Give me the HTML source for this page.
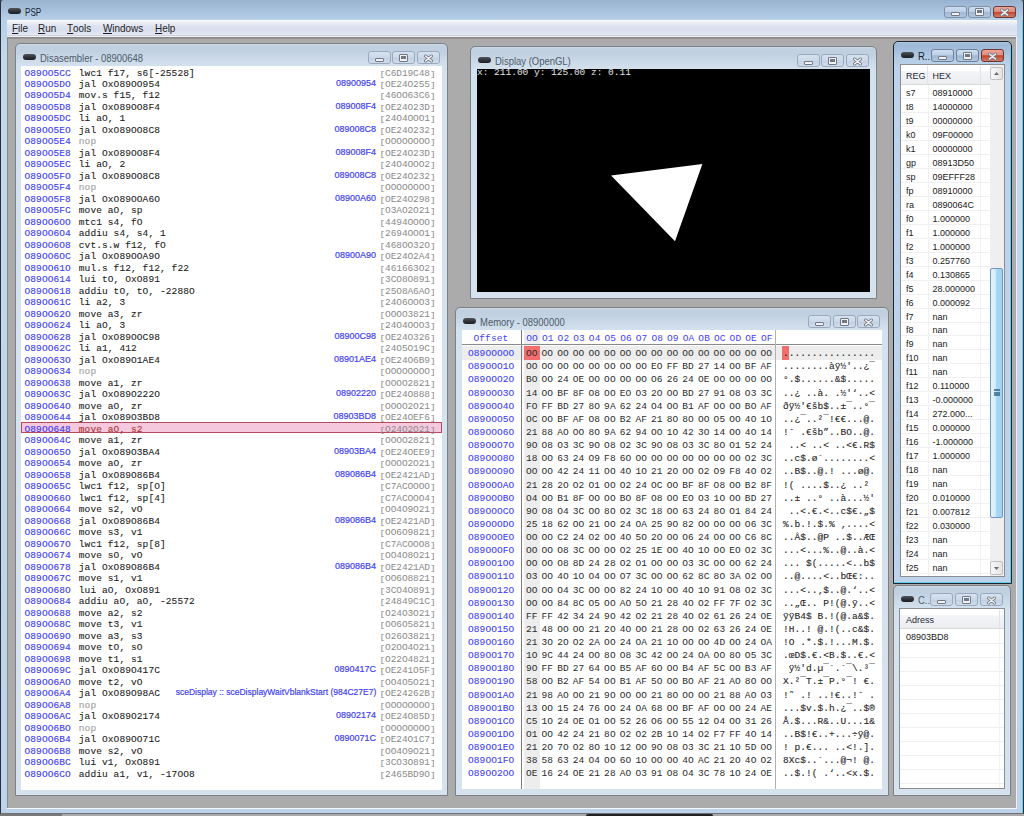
<!DOCTYPE html><html><head><meta charset="utf-8"><style>
*{margin:0;padding:0;box-sizing:border-box}
html,body{width:1024px;height:816px;overflow:hidden;background:#4a4a4a;position:relative}
body{font-family:"Liberation Sans",sans-serif}
.abs{position:absolute}
#main{position:absolute;left:0;top:0;width:1024px;height:814px;border:1px solid #2a2f38;border-top:0;border-bottom-color:#6e7276;border-radius:3px 3px 0 0;
 background:linear-gradient(#98b2d0 0px,#b6d0e8 20px,#c4d9ee 60px,#bcd3eb 814px)}
#mainr{position:absolute;left:1022px;top:20px;width:1px;height:793px;background:#5fd0f0}
#menubar{position:absolute;left:7px;top:20px;width:1010px;height:16px;
 background:linear-gradient(#ffffff 0px,#f2f4f8 1px,#eef0f6 2px,#dde2ef 6px,#dadfee 10px,#e1e6f2 14.5px,#cfd2e2 15px)}
#mdi{position:absolute;left:7px;top:36px;width:1010px;height:773px;background:#ababab;
 border-top:1px solid #f0f0f0;border-bottom:1px solid #f4f6f9;border-right:1px solid #f0f0f0}
#mdi:before{content:"";position:absolute;left:0;top:0;right:0;height:2px;background:linear-gradient(#888,#959595)}
#mdi:after{content:"";position:absolute;left:0;top:0;bottom:0;width:1px;background:#888}
.menu{position:absolute;top:21px;font-size:11px;color:#1e1e1e;line-height:14px;transform-origin:0 0;transform:scaleX(0.9)}
.menu u{text-decoration:none;position:relative}
.menu u:after{content:"";position:absolute;left:0;right:0;bottom:0px;height:1px;background:#1e1e1e}
.win{position:absolute;border:1px solid #7c7f84;border-radius:5px 5px 0 0;
 background:linear-gradient(#cfdbe8 0px,#c0d0e0 2px,#c2d1e1 8px,#cddbe9 16px,#d4e1ee 23px,#d6e3ef 100%)}
.win.active{border-color:#20252c;background:linear-gradient(#b4cae2 0px,#9eb9d8 2px,#a4bfdc 8px,#b6cde6 18px,#bcd3eb 26px,#bcd3eb 100%)}
.win.active:after{content:"";position:absolute;right:0;top:6px;bottom:0;width:1px;background:#5ccdf0}
.win.active:before{content:"";position:absolute;left:0;right:0;bottom:0;height:1px;background:#5ccdf0}
.ttl{position:absolute;font-size:11px;color:#4d5a6a;white-space:nowrap;line-height:13px;transform-origin:0 0;transform:scaleX(0.86)}
.win.active .ttl{color:#141c28}
.pill{position:absolute;width:13px;height:6px;border-radius:3px;background:linear-gradient(#50545c,#2e3137 55%,#1d1f23)}
.btn{position:absolute;width:23px;height:13px;border:1px solid #9aa9bd;border-radius:3px;
 background:linear-gradient(#d6e2ef,#cbd8e7 50%,#c1d0e2 55%,#d0ddeb)}
.win.active .btn{border-color:#6f809a;background:linear-gradient(#cfdeef,#bed0e6 45%,#9fb8d5 52%,#b3c8e0)}
.win.active .btn.cls{border-color:#6f3434;background:linear-gradient(#eaa597,#dd8d7b 45%,#c4462c 52%,#d77a60)}
.g{position:absolute}
.content{position:absolute;background:#fff;overflow:hidden}
.mono{font-family:"Liberation Mono",monospace}
.dl{position:absolute;left:0;height:12px;font-size:9.5px;letter-spacing:0.1px;line-height:12px;white-space:pre;color:#1e1e1e;-webkit-text-stroke:0.1px #1e1e1e}
.dl .addr{-webkit-text-stroke:0.15px #3f3ff2}
.dl .nop{-webkit-text-stroke:0.2px #a8a8a8}
.dl .sel{-webkit-text-stroke:0.1px #a83434}
.addr{color:#3f3ff2}
.nop{color:#a8a8a8}
.sel{color:#a83434}
.tgt{position:absolute;font-size:9px;color:#3f3ff2;line-height:12px;white-space:nowrap;text-align:right;-webkit-text-stroke:0.2px #3f3ff2}
.hex{position:absolute;font-size:9.5px;letter-spacing:-0.1px;color:#8a8a8a;line-height:12px;white-space:pre}
.hex b{font-weight:normal;display:inline-block;transform:scaleY(0.8)}
.mh{position:absolute;font-size:9.5px;letter-spacing:0.1px;line-height:12px;white-space:pre}
.reg{position:absolute;font-size:9px;color:#1a1a1a;line-height:12px;white-space:nowrap}
</style></head><body>
<div id="main"></div><div id="mainr"></div>
<div class="pill" style="left:8px;top:8px"></div>
<div class="ttl" style="left:25px;top:6px;color:#1c2533;font-size:11px;transform:scaleX(0.74)">PSP</div>
<div class="g" style="left:944px;top:6px;width:23px;height:12px;border:1px solid #7f90a8;border-radius:3px;background:linear-gradient(#cfdeef,#bed0e6 45%,#9fb8d5 52%,#b3c8e0)"></div>
<div class="g" style="left:968px;top:6px;width:23px;height:12px;border:1px solid #7f90a8;border-radius:3px;background:linear-gradient(#cfdeef,#bed0e6 45%,#9fb8d5 52%,#b3c8e0)"></div>
<div class="g" style="left:993px;top:6px;width:23px;height:12px;border:1px solid #6f3a3a;border-radius:3px;background:linear-gradient(#eaa597,#dd8d7b 45%,#c4462c 52%,#d77a60)"></div>
<div class="g" style="left:951px;top:11.5px;width:9px;height:4px;border:1px solid #707888;border-radius:1px;background:#f2f2f2"></div>
<div class="g" style="left:975px;top:8px;width:9px;height:8px;border:1px solid #707888;border-radius:1px;background:#f2f2f2"></div>
<div class="g" style="left:977px;top:10px;width:5px;height:3px;border:1px solid #707888;background:#6a7a90"></div>
<svg class="g" style="left:998.5px;top:7.5px" width="11" height="9" viewBox="0 0 11 9"><path d="M2.5 2 L8.5 7 M8.5 2 L2.5 7" stroke="#707888" stroke-width="3" stroke-linecap="round"/><path d="M2.5 2 L8.5 7 M8.5 2 L2.5 7" stroke="#f6f6f6" stroke-width="1.5" stroke-linecap="round"/></svg>
<div id="menubar"></div>
<div class="menu" style="left:12px"><u>F</u>ile</div>
<div class="menu" style="left:38px"><u>R</u>un</div>
<div class="menu" style="left:67px"><u>T</u>ools</div>
<div class="menu" style="left:103px"><u>W</u>indows</div>
<div class="menu" style="left:155px"><u>H</u>elp</div>
<div id="mdi"></div>
<div class="win" style="left:15px;top:43px;width:433px;height:753px">
<div class="pill" style="left:7px;top:10px"></div>
<div class="ttl" style="left:24px;top:8px">Disasembler - 08900648</div>
<div class="btn min" style="left:352px;top:7px"></div>
<div class="btn max" style="left:376px;top:7px"></div>
<div class="btn cls" style="left:401px;top:7px"></div>
</div>
<div class="g" style="left:375px;top:57.5px;width:9px;height:4px;border:1px solid #707888;border-radius:1px;background:#f2f2f2"></div>
<div class="g" style="left:399px;top:54px;width:9px;height:8px;border:1px solid #707888;border-radius:1px;background:#f2f2f2"></div>
<div class="g" style="left:401px;top:56px;width:5px;height:3px;border:1px solid #707888;background:#6a7a90"></div>
<svg class="g" style="left:422.5px;top:53.5px" width="11" height="9" viewBox="0 0 11 9"><path d="M2.5 2 L8.5 7 M8.5 2 L2.5 7" stroke="#707888" stroke-width="3" stroke-linecap="round"/><path d="M2.5 2 L8.5 7 M8.5 2 L2.5 7" stroke="#f6f6f6" stroke-width="1.5" stroke-linecap="round"/></svg>
<div class="content" style="left:21px;top:66px;width:421px;height:724px">
<div class="dl mono" style="left:3.5px;top:2px"><span class="addr">O89OO5CC</span></div>
<div class="dl mono" style="left:57.8px;top:2px"><span class="">lwc1 f17, s6[-25528]</span></div>
<div class="hex mono" style="left:358.5px;top:2px"><b>[</b>C6D19C48<b>]</b></div>
<div class="dl mono" style="left:3.5px;top:13px"><span class="addr">O89OO5DO</span></div>
<div class="dl mono" style="left:57.8px;top:13px"><span class="">jal OxO89OO954</span></div>
<div class="tgt" style="right:66px;top:11px">08900954</div>
<div class="hex mono" style="left:358.5px;top:13px"><b>[</b>OE24O255<b>]</b></div>
<div class="dl mono" style="left:3.5px;top:24px"><span class="addr">O89OO5D4</span></div>
<div class="dl mono" style="left:57.8px;top:24px"><span class="">mov.s f15, f12</span></div>
<div class="hex mono" style="left:358.5px;top:24px"><b>[</b>46OO63C6<b>]</b></div>
<div class="dl mono" style="left:3.5px;top:36px"><span class="addr">O89OO5D8</span></div>
<div class="dl mono" style="left:57.8px;top:36px"><span class="">jal OxO89OO8F4</span></div>
<div class="tgt" style="right:66px;top:34px">089008F4</div>
<div class="hex mono" style="left:358.5px;top:36px"><b>[</b>OE24O23D<b>]</b></div>
<div class="dl mono" style="left:3.5px;top:47px"><span class="addr">O89OO5DC</span></div>
<div class="dl mono" style="left:57.8px;top:47px"><span class="">li aO, 1</span></div>
<div class="hex mono" style="left:358.5px;top:47px"><b>[</b>24O4OOO1<b>]</b></div>
<div class="dl mono" style="left:3.5px;top:59px"><span class="addr">O89OO5EO</span></div>
<div class="dl mono" style="left:57.8px;top:59px"><span class="">jal OxO89OO8C8</span></div>
<div class="tgt" style="right:66px;top:57px">089008C8</div>
<div class="hex mono" style="left:358.5px;top:59px"><b>[</b>OE24O232<b>]</b></div>
<div class="dl mono" style="left:3.5px;top:70px"><span class="addr">O89OO5E4</span></div>
<div class="dl mono" style="left:57.8px;top:70px"><span class="nop">nop</span></div>
<div class="hex mono" style="left:358.5px;top:70px"><b>[</b>OOOOOOOO<b>]</b></div>
<div class="dl mono" style="left:3.5px;top:82px"><span class="addr">O89OO5E8</span></div>
<div class="dl mono" style="left:57.8px;top:82px"><span class="">jal OxO89OO8F4</span></div>
<div class="tgt" style="right:66px;top:80px">089008F4</div>
<div class="hex mono" style="left:358.5px;top:82px"><b>[</b>OE24O23D<b>]</b></div>
<div class="dl mono" style="left:3.5px;top:93px"><span class="addr">O89OO5EC</span></div>
<div class="dl mono" style="left:57.8px;top:93px"><span class="">li aO, 2</span></div>
<div class="hex mono" style="left:358.5px;top:93px"><b>[</b>24O4OOO2<b>]</b></div>
<div class="dl mono" style="left:3.5px;top:105px"><span class="addr">O89OO5FO</span></div>
<div class="dl mono" style="left:57.8px;top:105px"><span class="">jal OxO89OO8C8</span></div>
<div class="tgt" style="right:66px;top:103px">089008C8</div>
<div class="hex mono" style="left:358.5px;top:105px"><b>[</b>OE24O232<b>]</b></div>
<div class="dl mono" style="left:3.5px;top:116px"><span class="addr">O89OO5F4</span></div>
<div class="dl mono" style="left:57.8px;top:116px"><span class="nop">nop</span></div>
<div class="hex mono" style="left:358.5px;top:116px"><b>[</b>OOOOOOOO<b>]</b></div>
<div class="dl mono" style="left:3.5px;top:128px"><span class="addr">O89OO5F8</span></div>
<div class="dl mono" style="left:57.8px;top:128px"><span class="">jal OxO89OOA6O</span></div>
<div class="tgt" style="right:66px;top:126px">08900A60</div>
<div class="hex mono" style="left:358.5px;top:128px"><b>[</b>OE24O298<b>]</b></div>
<div class="dl mono" style="left:3.5px;top:139px"><span class="addr">O89OO5FC</span></div>
<div class="dl mono" style="left:57.8px;top:139px"><span class="">move aO, sp</span></div>
<div class="hex mono" style="left:358.5px;top:139px"><b>[</b>O3AO2O21<b>]</b></div>
<div class="dl mono" style="left:3.5px;top:151px"><span class="addr">O89OO6OO</span></div>
<div class="dl mono" style="left:57.8px;top:151px"><span class="">mtc1 s4, fO</span></div>
<div class="hex mono" style="left:358.5px;top:151px"><b>[</b>4494OOOO<b>]</b></div>
<div class="dl mono" style="left:3.5px;top:162px"><span class="addr">O89OO6O4</span></div>
<div class="dl mono" style="left:57.8px;top:162px"><span class="">addiu s4, s4, 1</span></div>
<div class="hex mono" style="left:358.5px;top:162px"><b>[</b>2694OOO1<b>]</b></div>
<div class="dl mono" style="left:3.5px;top:174px"><span class="addr">O89OO6O8</span></div>
<div class="dl mono" style="left:57.8px;top:174px"><span class="">cvt.s.w f12, fO</span></div>
<div class="hex mono" style="left:358.5px;top:174px"><b>[</b>468OO32O<b>]</b></div>
<div class="dl mono" style="left:3.5px;top:185px"><span class="addr">O89OO6OC</span></div>
<div class="dl mono" style="left:57.8px;top:185px"><span class="">jal OxO89OOA9O</span></div>
<div class="tgt" style="right:66px;top:183px">08900A90</div>
<div class="hex mono" style="left:358.5px;top:185px"><b>[</b>OE24O2A4<b>]</b></div>
<div class="dl mono" style="left:3.5px;top:197px"><span class="addr">O89OO61O</span></div>
<div class="dl mono" style="left:57.8px;top:197px"><span class="">mul.s f12, f12, f22</span></div>
<div class="hex mono" style="left:358.5px;top:197px"><b>[</b>461663O2<b>]</b></div>
<div class="dl mono" style="left:3.5px;top:208px"><span class="addr">O89OO614</span></div>
<div class="dl mono" style="left:57.8px;top:208px"><span class="">lui tO, OxO891</span></div>
<div class="hex mono" style="left:358.5px;top:208px"><b>[</b>3CO8O891<b>]</b></div>
<div class="dl mono" style="left:3.5px;top:220px"><span class="addr">O89OO618</span></div>
<div class="dl mono" style="left:57.8px;top:220px"><span class="">addiu tO, tO, -2288O</span></div>
<div class="hex mono" style="left:358.5px;top:220px"><b>[</b>25O8A6AO<b>]</b></div>
<div class="dl mono" style="left:3.5px;top:231px"><span class="addr">O89OO61C</span></div>
<div class="dl mono" style="left:57.8px;top:231px"><span class="">li a2, 3</span></div>
<div class="hex mono" style="left:358.5px;top:231px"><b>[</b>24O6OOO3<b>]</b></div>
<div class="dl mono" style="left:3.5px;top:243px"><span class="addr">O89OO62O</span></div>
<div class="dl mono" style="left:57.8px;top:243px"><span class="">move a3, zr</span></div>
<div class="hex mono" style="left:358.5px;top:243px"><b>[</b>OOOO3821<b>]</b></div>
<div class="dl mono" style="left:3.5px;top:254px"><span class="addr">O89OO624</span></div>
<div class="dl mono" style="left:57.8px;top:254px"><span class="">li aO, 3</span></div>
<div class="hex mono" style="left:358.5px;top:254px"><b>[</b>24O4OOO3<b>]</b></div>
<div class="dl mono" style="left:3.5px;top:266px"><span class="addr">O89OO628</span></div>
<div class="dl mono" style="left:57.8px;top:266px"><span class="">jal OxO89OOC98</span></div>
<div class="tgt" style="right:66px;top:264px">08900C98</div>
<div class="hex mono" style="left:358.5px;top:266px"><b>[</b>OE24O326<b>]</b></div>
<div class="dl mono" style="left:3.5px;top:277px"><span class="addr">O89OO62C</span></div>
<div class="dl mono" style="left:57.8px;top:277px"><span class="">li a1, 412</span></div>
<div class="hex mono" style="left:358.5px;top:277px"><b>[</b>24O5O19C<b>]</b></div>
<div class="dl mono" style="left:3.5px;top:289px"><span class="addr">O89OO63O</span></div>
<div class="dl mono" style="left:57.8px;top:289px"><span class="">jal OxO89O1AE4</span></div>
<div class="tgt" style="right:66px;top:287px">08901AE4</div>
<div class="hex mono" style="left:358.5px;top:289px"><b>[</b>OE24O6B9<b>]</b></div>
<div class="dl mono" style="left:3.5px;top:300px"><span class="addr">O89OO634</span></div>
<div class="dl mono" style="left:57.8px;top:300px"><span class="nop">nop</span></div>
<div class="hex mono" style="left:358.5px;top:300px"><b>[</b>OOOOOOOO<b>]</b></div>
<div class="dl mono" style="left:3.5px;top:312px"><span class="addr">O89OO638</span></div>
<div class="dl mono" style="left:57.8px;top:312px"><span class="">move a1, zr</span></div>
<div class="hex mono" style="left:358.5px;top:312px"><b>[</b>OOOO2821<b>]</b></div>
<div class="dl mono" style="left:3.5px;top:323px"><span class="addr">O89OO63C</span></div>
<div class="dl mono" style="left:57.8px;top:323px"><span class="">jal OxO89O222O</span></div>
<div class="tgt" style="right:66px;top:321px">08902220</div>
<div class="hex mono" style="left:358.5px;top:323px"><b>[</b>OE24O888<b>]</b></div>
<div class="dl mono" style="left:3.5px;top:335px"><span class="addr">O89OO64O</span></div>
<div class="dl mono" style="left:57.8px;top:335px"><span class="">move aO, zr</span></div>
<div class="hex mono" style="left:358.5px;top:335px"><b>[</b>OOOO2O21<b>]</b></div>
<div class="dl mono" style="left:3.5px;top:346px"><span class="addr">O89OO644</span></div>
<div class="dl mono" style="left:57.8px;top:346px"><span class="">jal OxO89O3BD8</span></div>
<div class="tgt" style="right:66px;top:344px">08903BD8</div>
<div class="hex mono" style="left:358.5px;top:346px"><b>[</b>OE24OEF6<b>]</b></div>
<div class="abs" style="left:0;top:356px;width:421px;height:11px;background:#f5c8de;border:1px solid #b34a5e"></div>
<div class="dl mono" style="left:3.5px;top:358px"><span class="addr">O89OO648</span></div>
<div class="dl mono" style="left:57.8px;top:358px"><span class="sel">move aO, s2</span></div>
<div class="hex mono" style="left:358.5px;top:358px"><b>[</b>O24O2O21<b>]</b></div>
<div class="dl mono" style="left:3.5px;top:369px"><span class="addr">O89OO64C</span></div>
<div class="dl mono" style="left:57.8px;top:369px"><span class="">move a1, zr</span></div>
<div class="hex mono" style="left:358.5px;top:369px"><b>[</b>OOOO2821<b>]</b></div>
<div class="dl mono" style="left:3.5px;top:381px"><span class="addr">O89OO65O</span></div>
<div class="dl mono" style="left:57.8px;top:381px"><span class="">jal OxO89O3BA4</span></div>
<div class="tgt" style="right:66px;top:379px">08903BA4</div>
<div class="hex mono" style="left:358.5px;top:381px"><b>[</b>OE24OEE9<b>]</b></div>
<div class="dl mono" style="left:3.5px;top:392px"><span class="addr">O89OO654</span></div>
<div class="dl mono" style="left:57.8px;top:392px"><span class="">move aO, zr</span></div>
<div class="hex mono" style="left:358.5px;top:392px"><b>[</b>OOOO2O21<b>]</b></div>
<div class="dl mono" style="left:3.5px;top:404px"><span class="addr">O89OO658</span></div>
<div class="dl mono" style="left:57.8px;top:404px"><span class="">jal OxO89O86B4</span></div>
<div class="tgt" style="right:66px;top:402px">089086B4</div>
<div class="hex mono" style="left:358.5px;top:404px"><b>[</b>OE2421AD<b>]</b></div>
<div class="dl mono" style="left:3.5px;top:415px"><span class="addr">O89OO65C</span></div>
<div class="dl mono" style="left:57.8px;top:415px"><span class="">lwc1 f12, sp[O]</span></div>
<div class="hex mono" style="left:358.5px;top:415px"><b>[</b>C7ACOOOO<b>]</b></div>
<div class="dl mono" style="left:3.5px;top:427px"><span class="addr">O89OO66O</span></div>
<div class="dl mono" style="left:57.8px;top:427px"><span class="">lwc1 f12, sp[4]</span></div>
<div class="hex mono" style="left:358.5px;top:427px"><b>[</b>C7ACOOO4<b>]</b></div>
<div class="dl mono" style="left:3.5px;top:438px"><span class="addr">O89OO664</span></div>
<div class="dl mono" style="left:57.8px;top:438px"><span class="">move s2, vO</span></div>
<div class="hex mono" style="left:358.5px;top:438px"><b>[</b>OO4O9O21<b>]</b></div>
<div class="dl mono" style="left:3.5px;top:450px"><span class="addr">O89OO668</span></div>
<div class="dl mono" style="left:57.8px;top:450px"><span class="">jal OxO89O86B4</span></div>
<div class="tgt" style="right:66px;top:448px">089086B4</div>
<div class="hex mono" style="left:358.5px;top:450px"><b>[</b>OE2421AD<b>]</b></div>
<div class="dl mono" style="left:3.5px;top:461px"><span class="addr">O89OO66C</span></div>
<div class="dl mono" style="left:57.8px;top:461px"><span class="">move s3, v1</span></div>
<div class="hex mono" style="left:358.5px;top:461px"><b>[</b>OO6O9821<b>]</b></div>
<div class="dl mono" style="left:3.5px;top:473px"><span class="addr">O89OO67O</span></div>
<div class="dl mono" style="left:57.8px;top:473px"><span class="">lwc1 f12, sp[8]</span></div>
<div class="hex mono" style="left:358.5px;top:473px"><b>[</b>C7ACOOO8<b>]</b></div>
<div class="dl mono" style="left:3.5px;top:484px"><span class="addr">O89OO674</span></div>
<div class="dl mono" style="left:57.8px;top:484px"><span class="">move sO, vO</span></div>
<div class="hex mono" style="left:358.5px;top:484px"><b>[</b>OO4O8O21<b>]</b></div>
<div class="dl mono" style="left:3.5px;top:496px"><span class="addr">O89OO678</span></div>
<div class="dl mono" style="left:57.8px;top:496px"><span class="">jal OxO89O86B4</span></div>
<div class="tgt" style="right:66px;top:494px">089086B4</div>
<div class="hex mono" style="left:358.5px;top:496px"><b>[</b>OE2421AD<b>]</b></div>
<div class="dl mono" style="left:3.5px;top:507px"><span class="addr">O89OO67C</span></div>
<div class="dl mono" style="left:57.8px;top:507px"><span class="">move s1, v1</span></div>
<div class="hex mono" style="left:358.5px;top:507px"><b>[</b>OO6O8821<b>]</b></div>
<div class="dl mono" style="left:3.5px;top:519px"><span class="addr">O89OO68O</span></div>
<div class="dl mono" style="left:57.8px;top:519px"><span class="">lui aO, OxO891</span></div>
<div class="hex mono" style="left:358.5px;top:519px"><b>[</b>3CO4O891<b>]</b></div>
<div class="dl mono" style="left:3.5px;top:530px"><span class="addr">O89OO684</span></div>
<div class="dl mono" style="left:57.8px;top:530px"><span class="">addiu aO, aO, -25572</span></div>
<div class="hex mono" style="left:358.5px;top:530px"><b>[</b>24849C1C<b>]</b></div>
<div class="dl mono" style="left:3.5px;top:542px"><span class="addr">O89OO688</span></div>
<div class="dl mono" style="left:57.8px;top:542px"><span class="">move a2, s2</span></div>
<div class="hex mono" style="left:358.5px;top:542px"><b>[</b>O24O3O21<b>]</b></div>
<div class="dl mono" style="left:3.5px;top:553px"><span class="addr">O89OO68C</span></div>
<div class="dl mono" style="left:57.8px;top:553px"><span class="">move t3, v1</span></div>
<div class="hex mono" style="left:358.5px;top:553px"><b>[</b>OO6O5821<b>]</b></div>
<div class="dl mono" style="left:3.5px;top:565px"><span class="addr">O89OO69O</span></div>
<div class="dl mono" style="left:57.8px;top:565px"><span class="">move a3, s3</span></div>
<div class="hex mono" style="left:358.5px;top:565px"><b>[</b>O26O3821<b>]</b></div>
<div class="dl mono" style="left:3.5px;top:576px"><span class="addr">O89OO694</span></div>
<div class="dl mono" style="left:57.8px;top:576px"><span class="">move tO, sO</span></div>
<div class="hex mono" style="left:358.5px;top:576px"><b>[</b>O2OO4O21<b>]</b></div>
<div class="dl mono" style="left:3.5px;top:588px"><span class="addr">O89OO698</span></div>
<div class="dl mono" style="left:57.8px;top:588px"><span class="">move t1, s1</span></div>
<div class="hex mono" style="left:358.5px;top:588px"><b>[</b>O22O4821<b>]</b></div>
<div class="dl mono" style="left:3.5px;top:599px"><span class="addr">O89OO69C</span></div>
<div class="dl mono" style="left:57.8px;top:599px"><span class="">jal OxO89O417C</span></div>
<div class="tgt" style="right:66px;top:597px">0890417C</div>
<div class="hex mono" style="left:358.5px;top:599px"><b>[</b>OE241O5F<b>]</b></div>
<div class="dl mono" style="left:3.5px;top:611px"><span class="addr">O89OO6AO</span></div>
<div class="dl mono" style="left:57.8px;top:611px"><span class="">move t2, vO</span></div>
<div class="hex mono" style="left:358.5px;top:611px"><b>[</b>OO4O5O21<b>]</b></div>
<div class="dl mono" style="left:3.5px;top:622px"><span class="addr">O89OO6A4</span></div>
<div class="dl mono" style="left:57.8px;top:622px"><span class="">jal OxO89O98AC</span></div>
<div class="tgt" style="right:66px;top:620px;transform-origin:100% 0;transform:scaleX(0.945)">sceDisplay :: sceDisplayWaitVblankStart (984C27E7)</div>
<div class="hex mono" style="left:358.5px;top:622px"><b>[</b>OE24262B<b>]</b></div>
<div class="dl mono" style="left:3.5px;top:634px"><span class="addr">O89OO6A8</span></div>
<div class="dl mono" style="left:57.8px;top:634px"><span class="nop">nop</span></div>
<div class="hex mono" style="left:358.5px;top:634px"><b>[</b>OOOOOOOO<b>]</b></div>
<div class="dl mono" style="left:3.5px;top:645px"><span class="addr">O89OO6AC</span></div>
<div class="dl mono" style="left:57.8px;top:645px"><span class="">jal OxO89O2174</span></div>
<div class="tgt" style="right:66px;top:643px">08902174</div>
<div class="hex mono" style="left:358.5px;top:645px"><b>[</b>OE24O85D<b>]</b></div>
<div class="dl mono" style="left:3.5px;top:657px"><span class="addr">O89OO6BO</span></div>
<div class="dl mono" style="left:57.8px;top:657px"><span class="nop">nop</span></div>
<div class="hex mono" style="left:358.5px;top:657px"><b>[</b>OOOOOOOO<b>]</b></div>
<div class="dl mono" style="left:3.5px;top:668px"><span class="addr">O89OO6B4</span></div>
<div class="dl mono" style="left:57.8px;top:668px"><span class="">jal OxO89OO71C</span></div>
<div class="tgt" style="right:66px;top:666px">0890071C</div>
<div class="hex mono" style="left:358.5px;top:668px"><b>[</b>OE24O1C7<b>]</b></div>
<div class="dl mono" style="left:3.5px;top:680px"><span class="addr">O89OO6B8</span></div>
<div class="dl mono" style="left:57.8px;top:680px"><span class="">move s2, vO</span></div>
<div class="hex mono" style="left:358.5px;top:680px"><b>[</b>OO4O9O21<b>]</b></div>
<div class="dl mono" style="left:3.5px;top:691px"><span class="addr">O89OO6BC</span></div>
<div class="dl mono" style="left:57.8px;top:691px"><span class="">lui v1, OxO891</span></div>
<div class="hex mono" style="left:358.5px;top:691px"><b>[</b>3CO3O891<b>]</b></div>
<div class="dl mono" style="left:3.5px;top:703px"><span class="addr">O89OO6CO</span></div>
<div class="dl mono" style="left:57.8px;top:703px"><span class="">addiu a1, v1, -17OO8</span></div>
<div class="hex mono" style="left:358.5px;top:703px"><b>[</b>2465BD9O<b>]</b></div>
</div>
<div class="win" style="left:470px;top:46px;width:407px;height:253px">
<div class="pill" style="left:7px;top:10px"></div>
<div class="ttl" style="left:24px;top:8px">Display (OpenGL)</div>
<div class="btn min" style="left:326px;top:7px"></div>
<div class="btn max" style="left:350px;top:7px"></div>
<div class="btn cls" style="left:375px;top:7px"></div>
</div>
<div class="g" style="left:804px;top:60.5px;width:9px;height:4px;border:1px solid #707888;border-radius:1px;background:#f2f2f2"></div>
<div class="g" style="left:828px;top:57px;width:9px;height:8px;border:1px solid #707888;border-radius:1px;background:#f2f2f2"></div>
<div class="g" style="left:830px;top:59px;width:5px;height:3px;border:1px solid #707888;background:#6a7a90"></div>
<svg class="g" style="left:851.5px;top:56.5px" width="11" height="9" viewBox="0 0 11 9"><path d="M2.5 2 L8.5 7 M8.5 2 L2.5 7" stroke="#707888" stroke-width="3" stroke-linecap="round"/><path d="M2.5 2 L8.5 7 M8.5 2 L2.5 7" stroke="#f6f6f6" stroke-width="1.5" stroke-linecap="round"/></svg>
<div class="content" style="left:477px;top:69px;width:393px;height:223px;background:#000">
<div class="abs mono" style="left:0;top:-2px;font-size:9.5px;color:#e4e4e4;white-space:pre;line-height:12px">x: 211.00 y: 125.00 z: 0.11</div>
<svg class="abs" style="left:0;top:0" width="394" height="223"><polygon points="134.05,106.6 225.4,95 198,172.2" fill="#fff"/></svg>
</div>
<div class="win" style="left:455px;top:307px;width:434px;height:489px">
<div class="pill" style="left:7px;top:10px"></div>
<div class="ttl" style="left:24px;top:8px">Memory - 08900000</div>
<div class="btn min" style="left:352px;top:7px"></div>
<div class="btn max" style="left:377px;top:7px"></div>
<div class="btn cls" style="left:401px;top:7px"></div>
</div>
<div class="g" style="left:815px;top:321.5px;width:9px;height:4px;border:1px solid #707888;border-radius:1px;background:#f2f2f2"></div>
<div class="g" style="left:840px;top:318px;width:9px;height:8px;border:1px solid #707888;border-radius:1px;background:#f2f2f2"></div>
<div class="g" style="left:842px;top:320px;width:5px;height:3px;border:1px solid #707888;background:#6a7a90"></div>
<svg class="g" style="left:862.5px;top:317.5px" width="11" height="9" viewBox="0 0 11 9"><path d="M2.5 2 L8.5 7 M8.5 2 L2.5 7" stroke="#707888" stroke-width="3" stroke-linecap="round"/><path d="M2.5 2 L8.5 7 M8.5 2 L2.5 7" stroke="#f6f6f6" stroke-width="1.5" stroke-linecap="round"/></svg>
<div class="content" style="left:462px;top:330px;width:420px;height:459px">
<div class="abs" style="left:62px;top:0;width:16px;height:459px;background:#ededed"></div>
<div class="abs" style="left:0;top:16px;width:420px;height:14px;background:#ededed"></div>
<div class="abs" style="left:62px;top:16px;width:16px;height:14px;background:#f26d6d"></div>
<div class="abs" style="left:320px;top:16px;width:7px;height:14px;background:#f26d6d"></div>
<div class="abs" style="left:59px;top:0;width:1px;height:459px;background:#7a7a7a"></div>
<div class="abs" style="left:0;top:14px;width:420px;height:1px;background:#8a8a8a"></div>
<div class="abs" style="left:313px;top:0;width:1px;height:459px;background:#b0b0b0"></div>
<div class="mh mono" style="left:11.5px;top:3px;color:#3f3ff2">Offset</div>
<div class="mh mono" style="left:64.30px;top:3px;color:#3f3ff2">OO</div>
<div class="mh mono" style="left:79.94px;top:3px;color:#3f3ff2">O1</div>
<div class="mh mono" style="left:95.58px;top:3px;color:#3f3ff2">O2</div>
<div class="mh mono" style="left:111.22px;top:3px;color:#3f3ff2">O3</div>
<div class="mh mono" style="left:126.86px;top:3px;color:#3f3ff2">O4</div>
<div class="mh mono" style="left:142.50px;top:3px;color:#3f3ff2">O5</div>
<div class="mh mono" style="left:158.14px;top:3px;color:#3f3ff2">O6</div>
<div class="mh mono" style="left:173.78px;top:3px;color:#3f3ff2">O7</div>
<div class="mh mono" style="left:189.42px;top:3px;color:#3f3ff2">O8</div>
<div class="mh mono" style="left:205.06px;top:3px;color:#3f3ff2">O9</div>
<div class="mh mono" style="left:220.70px;top:3px;color:#3f3ff2">OA</div>
<div class="mh mono" style="left:236.34px;top:3px;color:#3f3ff2">OB</div>
<div class="mh mono" style="left:251.98px;top:3px;color:#3f3ff2">OC</div>
<div class="mh mono" style="left:267.62px;top:3px;color:#3f3ff2">OD</div>
<div class="mh mono" style="left:283.26px;top:3px;color:#3f3ff2">OE</div>
<div class="mh mono" style="left:298.90px;top:3px;color:#3f3ff2">OF</div>
<div class="mh mono" style="left:6px;top:18px;color:#3f3ff2;-webkit-text-stroke:0.1px #3f3ff2">O89OOOOO</div>
<div class="mh mono" style="left:63.90px;top:18px;color:#2c2c2c">OO</div>
<div class="mh mono" style="left:79.54px;top:18px;color:#2c2c2c">OO</div>
<div class="mh mono" style="left:95.18px;top:18px;color:#2c2c2c">OO</div>
<div class="mh mono" style="left:110.82px;top:18px;color:#2c2c2c">OO</div>
<div class="mh mono" style="left:126.46px;top:18px;color:#2c2c2c">OO</div>
<div class="mh mono" style="left:142.10px;top:18px;color:#2c2c2c">OO</div>
<div class="mh mono" style="left:157.74px;top:18px;color:#2c2c2c">OO</div>
<div class="mh mono" style="left:173.38px;top:18px;color:#2c2c2c">OO</div>
<div class="mh mono" style="left:189.02px;top:18px;color:#2c2c2c">OO</div>
<div class="mh mono" style="left:204.66px;top:18px;color:#2c2c2c">OO</div>
<div class="mh mono" style="left:220.30px;top:18px;color:#2c2c2c">OO</div>
<div class="mh mono" style="left:235.94px;top:18px;color:#2c2c2c">OO</div>
<div class="mh mono" style="left:251.58px;top:18px;color:#2c2c2c">OO</div>
<div class="mh mono" style="left:267.22px;top:18px;color:#2c2c2c">OO</div>
<div class="mh mono" style="left:282.86px;top:18px;color:#2c2c2c">OO</div>
<div class="mh mono" style="left:298.50px;top:18px;color:#2c2c2c">OO</div>
<div class="mh mono" style="left:321px;top:18px;color:#262626;letter-spacing:0.05px;-webkit-text-stroke:0.1px #262626">................</div>
<div class="mh mono" style="left:6px;top:31px;color:#3f3ff2;-webkit-text-stroke:0.1px #3f3ff2">O89OOO1O</div>
<div class="mh mono" style="left:63.90px;top:31px;color:#2c2c2c">OO</div>
<div class="mh mono" style="left:79.54px;top:31px;color:#2c2c2c">OO</div>
<div class="mh mono" style="left:95.18px;top:31px;color:#2c2c2c">OO</div>
<div class="mh mono" style="left:110.82px;top:31px;color:#2c2c2c">OO</div>
<div class="mh mono" style="left:126.46px;top:31px;color:#2c2c2c">OO</div>
<div class="mh mono" style="left:142.10px;top:31px;color:#2c2c2c">OO</div>
<div class="mh mono" style="left:157.74px;top:31px;color:#2c2c2c">OO</div>
<div class="mh mono" style="left:173.38px;top:31px;color:#2c2c2c">OO</div>
<div class="mh mono" style="left:189.02px;top:31px;color:#2c2c2c">EO</div>
<div class="mh mono" style="left:204.66px;top:31px;color:#2c2c2c">FF</div>
<div class="mh mono" style="left:220.30px;top:31px;color:#2c2c2c">BD</div>
<div class="mh mono" style="left:235.94px;top:31px;color:#2c2c2c">27</div>
<div class="mh mono" style="left:251.58px;top:31px;color:#2c2c2c">14</div>
<div class="mh mono" style="left:267.22px;top:31px;color:#2c2c2c">OO</div>
<div class="mh mono" style="left:282.86px;top:31px;color:#2c2c2c">BF</div>
<div class="mh mono" style="left:298.50px;top:31px;color:#2c2c2c">AF</div>
<div class="mh mono" style="left:321px;top:31px;color:#262626;letter-spacing:0.05px;-webkit-text-stroke:0.1px #262626">........àÿ½'..¿¯</div>
<div class="mh mono" style="left:6px;top:44px;color:#3f3ff2;-webkit-text-stroke:0.1px #3f3ff2">O89OOO2O</div>
<div class="mh mono" style="left:63.90px;top:44px;color:#2c2c2c">BO</div>
<div class="mh mono" style="left:79.54px;top:44px;color:#2c2c2c">OO</div>
<div class="mh mono" style="left:95.18px;top:44px;color:#2c2c2c">24</div>
<div class="mh mono" style="left:110.82px;top:44px;color:#2c2c2c">OE</div>
<div class="mh mono" style="left:126.46px;top:44px;color:#2c2c2c">OO</div>
<div class="mh mono" style="left:142.10px;top:44px;color:#2c2c2c">OO</div>
<div class="mh mono" style="left:157.74px;top:44px;color:#2c2c2c">OO</div>
<div class="mh mono" style="left:173.38px;top:44px;color:#2c2c2c">OO</div>
<div class="mh mono" style="left:189.02px;top:44px;color:#2c2c2c">O6</div>
<div class="mh mono" style="left:204.66px;top:44px;color:#2c2c2c">26</div>
<div class="mh mono" style="left:220.30px;top:44px;color:#2c2c2c">24</div>
<div class="mh mono" style="left:235.94px;top:44px;color:#2c2c2c">OE</div>
<div class="mh mono" style="left:251.58px;top:44px;color:#2c2c2c">OO</div>
<div class="mh mono" style="left:267.22px;top:44px;color:#2c2c2c">OO</div>
<div class="mh mono" style="left:282.86px;top:44px;color:#2c2c2c">OO</div>
<div class="mh mono" style="left:298.50px;top:44px;color:#2c2c2c">OO</div>
<div class="mh mono" style="left:321px;top:44px;color:#262626;letter-spacing:0.05px;-webkit-text-stroke:0.1px #262626">°.$......&amp;$.....</div>
<div class="mh mono" style="left:6px;top:58px;color:#3f3ff2;-webkit-text-stroke:0.1px #3f3ff2">O89OOO3O</div>
<div class="mh mono" style="left:63.90px;top:58px;color:#2c2c2c">14</div>
<div class="mh mono" style="left:79.54px;top:58px;color:#2c2c2c">OO</div>
<div class="mh mono" style="left:95.18px;top:58px;color:#2c2c2c">BF</div>
<div class="mh mono" style="left:110.82px;top:58px;color:#2c2c2c">8F</div>
<div class="mh mono" style="left:126.46px;top:58px;color:#2c2c2c">O8</div>
<div class="mh mono" style="left:142.10px;top:58px;color:#2c2c2c">OO</div>
<div class="mh mono" style="left:157.74px;top:58px;color:#2c2c2c">EO</div>
<div class="mh mono" style="left:173.38px;top:58px;color:#2c2c2c">O3</div>
<div class="mh mono" style="left:189.02px;top:58px;color:#2c2c2c">2O</div>
<div class="mh mono" style="left:204.66px;top:58px;color:#2c2c2c">OO</div>
<div class="mh mono" style="left:220.30px;top:58px;color:#2c2c2c">BD</div>
<div class="mh mono" style="left:235.94px;top:58px;color:#2c2c2c">27</div>
<div class="mh mono" style="left:251.58px;top:58px;color:#2c2c2c">91</div>
<div class="mh mono" style="left:267.22px;top:58px;color:#2c2c2c">O8</div>
<div class="mh mono" style="left:282.86px;top:58px;color:#2c2c2c">O3</div>
<div class="mh mono" style="left:298.50px;top:58px;color:#2c2c2c">3C</div>
<div class="mh mono" style="left:321px;top:58px;color:#262626;letter-spacing:0.05px;-webkit-text-stroke:0.1px #262626">..¿ ..à. .½'‘..&lt;</div>
<div class="mh mono" style="left:6px;top:71px;color:#3f3ff2;-webkit-text-stroke:0.1px #3f3ff2">O89OOO4O</div>
<div class="mh mono" style="left:63.90px;top:71px;color:#2c2c2c">FO</div>
<div class="mh mono" style="left:79.54px;top:71px;color:#2c2c2c">FF</div>
<div class="mh mono" style="left:95.18px;top:71px;color:#2c2c2c">BD</div>
<div class="mh mono" style="left:110.82px;top:71px;color:#2c2c2c">27</div>
<div class="mh mono" style="left:126.46px;top:71px;color:#2c2c2c">8O</div>
<div class="mh mono" style="left:142.10px;top:71px;color:#2c2c2c">9A</div>
<div class="mh mono" style="left:157.74px;top:71px;color:#2c2c2c">62</div>
<div class="mh mono" style="left:173.38px;top:71px;color:#2c2c2c">24</div>
<div class="mh mono" style="left:189.02px;top:71px;color:#2c2c2c">O4</div>
<div class="mh mono" style="left:204.66px;top:71px;color:#2c2c2c">OO</div>
<div class="mh mono" style="left:220.30px;top:71px;color:#2c2c2c">B1</div>
<div class="mh mono" style="left:235.94px;top:71px;color:#2c2c2c">AF</div>
<div class="mh mono" style="left:251.58px;top:71px;color:#2c2c2c">OO</div>
<div class="mh mono" style="left:267.22px;top:71px;color:#2c2c2c">OO</div>
<div class="mh mono" style="left:282.86px;top:71px;color:#2c2c2c">BO</div>
<div class="mh mono" style="left:298.50px;top:71px;color:#2c2c2c">AF</div>
<div class="mh mono" style="left:321px;top:71px;color:#262626;letter-spacing:0.05px;-webkit-text-stroke:0.1px #262626">ðÿ½'€šb$..±¯..°¯</div>
<div class="mh mono" style="left:6px;top:84px;color:#3f3ff2;-webkit-text-stroke:0.1px #3f3ff2">O89OOO5O</div>
<div class="mh mono" style="left:63.90px;top:84px;color:#2c2c2c">OC</div>
<div class="mh mono" style="left:79.54px;top:84px;color:#2c2c2c">OO</div>
<div class="mh mono" style="left:95.18px;top:84px;color:#2c2c2c">BF</div>
<div class="mh mono" style="left:110.82px;top:84px;color:#2c2c2c">AF</div>
<div class="mh mono" style="left:126.46px;top:84px;color:#2c2c2c">O8</div>
<div class="mh mono" style="left:142.10px;top:84px;color:#2c2c2c">OO</div>
<div class="mh mono" style="left:157.74px;top:84px;color:#2c2c2c">B2</div>
<div class="mh mono" style="left:173.38px;top:84px;color:#2c2c2c">AF</div>
<div class="mh mono" style="left:189.02px;top:84px;color:#2c2c2c">21</div>
<div class="mh mono" style="left:204.66px;top:84px;color:#2c2c2c">8O</div>
<div class="mh mono" style="left:220.30px;top:84px;color:#2c2c2c">8O</div>
<div class="mh mono" style="left:235.94px;top:84px;color:#2c2c2c">OO</div>
<div class="mh mono" style="left:251.58px;top:84px;color:#2c2c2c">O5</div>
<div class="mh mono" style="left:267.22px;top:84px;color:#2c2c2c">OO</div>
<div class="mh mono" style="left:282.86px;top:84px;color:#2c2c2c">4O</div>
<div class="mh mono" style="left:298.50px;top:84px;color:#2c2c2c">1O</div>
<div class="mh mono" style="left:321px;top:84px;color:#262626;letter-spacing:0.05px;-webkit-text-stroke:0.1px #262626">..¿¯..²¯!€€...@.</div>
<div class="mh mono" style="left:6px;top:97px;color:#3f3ff2;-webkit-text-stroke:0.1px #3f3ff2">O89OOO6O</div>
<div class="mh mono" style="left:63.90px;top:97px;color:#2c2c2c">21</div>
<div class="mh mono" style="left:79.54px;top:97px;color:#2c2c2c">88</div>
<div class="mh mono" style="left:95.18px;top:97px;color:#2c2c2c">AO</div>
<div class="mh mono" style="left:110.82px;top:97px;color:#2c2c2c">OO</div>
<div class="mh mono" style="left:126.46px;top:97px;color:#2c2c2c">8O</div>
<div class="mh mono" style="left:142.10px;top:97px;color:#2c2c2c">9A</div>
<div class="mh mono" style="left:157.74px;top:97px;color:#2c2c2c">62</div>
<div class="mh mono" style="left:173.38px;top:97px;color:#2c2c2c">94</div>
<div class="mh mono" style="left:189.02px;top:97px;color:#2c2c2c">OO</div>
<div class="mh mono" style="left:204.66px;top:97px;color:#2c2c2c">1O</div>
<div class="mh mono" style="left:220.30px;top:97px;color:#2c2c2c">42</div>
<div class="mh mono" style="left:235.94px;top:97px;color:#2c2c2c">3O</div>
<div class="mh mono" style="left:251.58px;top:97px;color:#2c2c2c">14</div>
<div class="mh mono" style="left:267.22px;top:97px;color:#2c2c2c">OO</div>
<div class="mh mono" style="left:282.86px;top:97px;color:#2c2c2c">4O</div>
<div class="mh mono" style="left:298.50px;top:97px;color:#2c2c2c">14</div>
<div class="mh mono" style="left:321px;top:97px;color:#262626;letter-spacing:0.05px;-webkit-text-stroke:0.1px #262626">!ˆ .€šb”..BO..@.</div>
<div class="mh mono" style="left:6px;top:110px;color:#3f3ff2;-webkit-text-stroke:0.1px #3f3ff2">O89OOO7O</div>
<div class="mh mono" style="left:63.90px;top:110px;color:#2c2c2c">9O</div>
<div class="mh mono" style="left:79.54px;top:110px;color:#2c2c2c">O8</div>
<div class="mh mono" style="left:95.18px;top:110px;color:#2c2c2c">O3</div>
<div class="mh mono" style="left:110.82px;top:110px;color:#2c2c2c">3C</div>
<div class="mh mono" style="left:126.46px;top:110px;color:#2c2c2c">9O</div>
<div class="mh mono" style="left:142.10px;top:110px;color:#2c2c2c">O8</div>
<div class="mh mono" style="left:157.74px;top:110px;color:#2c2c2c">O2</div>
<div class="mh mono" style="left:173.38px;top:110px;color:#2c2c2c">3C</div>
<div class="mh mono" style="left:189.02px;top:110px;color:#2c2c2c">9O</div>
<div class="mh mono" style="left:204.66px;top:110px;color:#2c2c2c">O8</div>
<div class="mh mono" style="left:220.30px;top:110px;color:#2c2c2c">O3</div>
<div class="mh mono" style="left:235.94px;top:110px;color:#2c2c2c">3C</div>
<div class="mh mono" style="left:251.58px;top:110px;color:#2c2c2c">8O</div>
<div class="mh mono" style="left:267.22px;top:110px;color:#2c2c2c">O1</div>
<div class="mh mono" style="left:282.86px;top:110px;color:#2c2c2c">52</div>
<div class="mh mono" style="left:298.50px;top:110px;color:#2c2c2c">24</div>
<div class="mh mono" style="left:321px;top:110px;color:#262626;letter-spacing:0.05px;-webkit-text-stroke:0.1px #262626"> ..&lt; ..&lt; ..&lt;€.R$</div>
<div class="mh mono" style="left:6px;top:123px;color:#3f3ff2;-webkit-text-stroke:0.1px #3f3ff2">O89OOO8O</div>
<div class="mh mono" style="left:63.90px;top:123px;color:#2c2c2c">18</div>
<div class="mh mono" style="left:79.54px;top:123px;color:#2c2c2c">OO</div>
<div class="mh mono" style="left:95.18px;top:123px;color:#2c2c2c">63</div>
<div class="mh mono" style="left:110.82px;top:123px;color:#2c2c2c">24</div>
<div class="mh mono" style="left:126.46px;top:123px;color:#2c2c2c">O9</div>
<div class="mh mono" style="left:142.10px;top:123px;color:#2c2c2c">F8</div>
<div class="mh mono" style="left:157.74px;top:123px;color:#2c2c2c">6O</div>
<div class="mh mono" style="left:173.38px;top:123px;color:#2c2c2c">OO</div>
<div class="mh mono" style="left:189.02px;top:123px;color:#2c2c2c">OO</div>
<div class="mh mono" style="left:204.66px;top:123px;color:#2c2c2c">OO</div>
<div class="mh mono" style="left:220.30px;top:123px;color:#2c2c2c">OO</div>
<div class="mh mono" style="left:235.94px;top:123px;color:#2c2c2c">OO</div>
<div class="mh mono" style="left:251.58px;top:123px;color:#2c2c2c">OO</div>
<div class="mh mono" style="left:267.22px;top:123px;color:#2c2c2c">OO</div>
<div class="mh mono" style="left:282.86px;top:123px;color:#2c2c2c">O2</div>
<div class="mh mono" style="left:298.50px;top:123px;color:#2c2c2c">3C</div>
<div class="mh mono" style="left:321px;top:123px;color:#262626;letter-spacing:0.05px;-webkit-text-stroke:0.1px #262626">..c$.ø`........&lt;</div>
<div class="mh mono" style="left:6px;top:136px;color:#3f3ff2;-webkit-text-stroke:0.1px #3f3ff2">O89OOO9O</div>
<div class="mh mono" style="left:63.90px;top:136px;color:#2c2c2c">OO</div>
<div class="mh mono" style="left:79.54px;top:136px;color:#2c2c2c">OO</div>
<div class="mh mono" style="left:95.18px;top:136px;color:#2c2c2c">42</div>
<div class="mh mono" style="left:110.82px;top:136px;color:#2c2c2c">24</div>
<div class="mh mono" style="left:126.46px;top:136px;color:#2c2c2c">11</div>
<div class="mh mono" style="left:142.10px;top:136px;color:#2c2c2c">OO</div>
<div class="mh mono" style="left:157.74px;top:136px;color:#2c2c2c">4O</div>
<div class="mh mono" style="left:173.38px;top:136px;color:#2c2c2c">1O</div>
<div class="mh mono" style="left:189.02px;top:136px;color:#2c2c2c">21</div>
<div class="mh mono" style="left:204.66px;top:136px;color:#2c2c2c">2O</div>
<div class="mh mono" style="left:220.30px;top:136px;color:#2c2c2c">OO</div>
<div class="mh mono" style="left:235.94px;top:136px;color:#2c2c2c">O2</div>
<div class="mh mono" style="left:251.58px;top:136px;color:#2c2c2c">O9</div>
<div class="mh mono" style="left:267.22px;top:136px;color:#2c2c2c">F8</div>
<div class="mh mono" style="left:282.86px;top:136px;color:#2c2c2c">4O</div>
<div class="mh mono" style="left:298.50px;top:136px;color:#2c2c2c">O2</div>
<div class="mh mono" style="left:321px;top:136px;color:#262626;letter-spacing:0.05px;-webkit-text-stroke:0.1px #262626">..B$..@.! ...ø@.</div>
<div class="mh mono" style="left:6px;top:150px;color:#3f3ff2;-webkit-text-stroke:0.1px #3f3ff2">O89OOOAO</div>
<div class="mh mono" style="left:63.90px;top:150px;color:#2c2c2c">21</div>
<div class="mh mono" style="left:79.54px;top:150px;color:#2c2c2c">28</div>
<div class="mh mono" style="left:95.18px;top:150px;color:#2c2c2c">2O</div>
<div class="mh mono" style="left:110.82px;top:150px;color:#2c2c2c">O2</div>
<div class="mh mono" style="left:126.46px;top:150px;color:#2c2c2c">O1</div>
<div class="mh mono" style="left:142.10px;top:150px;color:#2c2c2c">OO</div>
<div class="mh mono" style="left:157.74px;top:150px;color:#2c2c2c">O2</div>
<div class="mh mono" style="left:173.38px;top:150px;color:#2c2c2c">24</div>
<div class="mh mono" style="left:189.02px;top:150px;color:#2c2c2c">OC</div>
<div class="mh mono" style="left:204.66px;top:150px;color:#2c2c2c">OO</div>
<div class="mh mono" style="left:220.30px;top:150px;color:#2c2c2c">BF</div>
<div class="mh mono" style="left:235.94px;top:150px;color:#2c2c2c">8F</div>
<div class="mh mono" style="left:251.58px;top:150px;color:#2c2c2c">O8</div>
<div class="mh mono" style="left:267.22px;top:150px;color:#2c2c2c">OO</div>
<div class="mh mono" style="left:282.86px;top:150px;color:#2c2c2c">B2</div>
<div class="mh mono" style="left:298.50px;top:150px;color:#2c2c2c">8F</div>
<div class="mh mono" style="left:321px;top:150px;color:#262626;letter-spacing:0.05px;-webkit-text-stroke:0.1px #262626">!( ....$..¿ ..² </div>
<div class="mh mono" style="left:6px;top:163px;color:#3f3ff2;-webkit-text-stroke:0.1px #3f3ff2">O89OOOBO</div>
<div class="mh mono" style="left:63.90px;top:163px;color:#2c2c2c">O4</div>
<div class="mh mono" style="left:79.54px;top:163px;color:#2c2c2c">OO</div>
<div class="mh mono" style="left:95.18px;top:163px;color:#2c2c2c">B1</div>
<div class="mh mono" style="left:110.82px;top:163px;color:#2c2c2c">8F</div>
<div class="mh mono" style="left:126.46px;top:163px;color:#2c2c2c">OO</div>
<div class="mh mono" style="left:142.10px;top:163px;color:#2c2c2c">OO</div>
<div class="mh mono" style="left:157.74px;top:163px;color:#2c2c2c">BO</div>
<div class="mh mono" style="left:173.38px;top:163px;color:#2c2c2c">8F</div>
<div class="mh mono" style="left:189.02px;top:163px;color:#2c2c2c">O8</div>
<div class="mh mono" style="left:204.66px;top:163px;color:#2c2c2c">OO</div>
<div class="mh mono" style="left:220.30px;top:163px;color:#2c2c2c">EO</div>
<div class="mh mono" style="left:235.94px;top:163px;color:#2c2c2c">O3</div>
<div class="mh mono" style="left:251.58px;top:163px;color:#2c2c2c">1O</div>
<div class="mh mono" style="left:267.22px;top:163px;color:#2c2c2c">OO</div>
<div class="mh mono" style="left:282.86px;top:163px;color:#2c2c2c">BD</div>
<div class="mh mono" style="left:298.50px;top:163px;color:#2c2c2c">27</div>
<div class="mh mono" style="left:321px;top:163px;color:#262626;letter-spacing:0.05px;-webkit-text-stroke:0.1px #262626">..± ..° ..à...½'</div>
<div class="mh mono" style="left:6px;top:176px;color:#3f3ff2;-webkit-text-stroke:0.1px #3f3ff2">O89OOOCO</div>
<div class="mh mono" style="left:63.90px;top:176px;color:#2c2c2c">9O</div>
<div class="mh mono" style="left:79.54px;top:176px;color:#2c2c2c">O8</div>
<div class="mh mono" style="left:95.18px;top:176px;color:#2c2c2c">O4</div>
<div class="mh mono" style="left:110.82px;top:176px;color:#2c2c2c">3C</div>
<div class="mh mono" style="left:126.46px;top:176px;color:#2c2c2c">OO</div>
<div class="mh mono" style="left:142.10px;top:176px;color:#2c2c2c">8O</div>
<div class="mh mono" style="left:157.74px;top:176px;color:#2c2c2c">O2</div>
<div class="mh mono" style="left:173.38px;top:176px;color:#2c2c2c">3C</div>
<div class="mh mono" style="left:189.02px;top:176px;color:#2c2c2c">18</div>
<div class="mh mono" style="left:204.66px;top:176px;color:#2c2c2c">OO</div>
<div class="mh mono" style="left:220.30px;top:176px;color:#2c2c2c">63</div>
<div class="mh mono" style="left:235.94px;top:176px;color:#2c2c2c">24</div>
<div class="mh mono" style="left:251.58px;top:176px;color:#2c2c2c">8O</div>
<div class="mh mono" style="left:267.22px;top:176px;color:#2c2c2c">O1</div>
<div class="mh mono" style="left:282.86px;top:176px;color:#2c2c2c">84</div>
<div class="mh mono" style="left:298.50px;top:176px;color:#2c2c2c">24</div>
<div class="mh mono" style="left:321px;top:176px;color:#262626;letter-spacing:0.05px;-webkit-text-stroke:0.1px #262626"> ..&lt;.€.&lt;..c$€.„$</div>
<div class="mh mono" style="left:6px;top:189px;color:#3f3ff2;-webkit-text-stroke:0.1px #3f3ff2">O89OOODO</div>
<div class="mh mono" style="left:63.90px;top:189px;color:#2c2c2c">25</div>
<div class="mh mono" style="left:79.54px;top:189px;color:#2c2c2c">18</div>
<div class="mh mono" style="left:95.18px;top:189px;color:#2c2c2c">62</div>
<div class="mh mono" style="left:110.82px;top:189px;color:#2c2c2c">OO</div>
<div class="mh mono" style="left:126.46px;top:189px;color:#2c2c2c">21</div>
<div class="mh mono" style="left:142.10px;top:189px;color:#2c2c2c">OO</div>
<div class="mh mono" style="left:157.74px;top:189px;color:#2c2c2c">24</div>
<div class="mh mono" style="left:173.38px;top:189px;color:#2c2c2c">OA</div>
<div class="mh mono" style="left:189.02px;top:189px;color:#2c2c2c">25</div>
<div class="mh mono" style="left:204.66px;top:189px;color:#2c2c2c">9O</div>
<div class="mh mono" style="left:220.30px;top:189px;color:#2c2c2c">82</div>
<div class="mh mono" style="left:235.94px;top:189px;color:#2c2c2c">OO</div>
<div class="mh mono" style="left:251.58px;top:189px;color:#2c2c2c">OO</div>
<div class="mh mono" style="left:267.22px;top:189px;color:#2c2c2c">OO</div>
<div class="mh mono" style="left:282.86px;top:189px;color:#2c2c2c">O6</div>
<div class="mh mono" style="left:298.50px;top:189px;color:#2c2c2c">3C</div>
<div class="mh mono" style="left:321px;top:189px;color:#262626;letter-spacing:0.05px;-webkit-text-stroke:0.1px #262626">%.b.!.$.% ‚....&lt;</div>
<div class="mh mono" style="left:6px;top:202px;color:#3f3ff2;-webkit-text-stroke:0.1px #3f3ff2">O89OOOEO</div>
<div class="mh mono" style="left:63.90px;top:202px;color:#2c2c2c">OO</div>
<div class="mh mono" style="left:79.54px;top:202px;color:#2c2c2c">OO</div>
<div class="mh mono" style="left:95.18px;top:202px;color:#2c2c2c">C2</div>
<div class="mh mono" style="left:110.82px;top:202px;color:#2c2c2c">24</div>
<div class="mh mono" style="left:126.46px;top:202px;color:#2c2c2c">O2</div>
<div class="mh mono" style="left:142.10px;top:202px;color:#2c2c2c">OO</div>
<div class="mh mono" style="left:157.74px;top:202px;color:#2c2c2c">4O</div>
<div class="mh mono" style="left:173.38px;top:202px;color:#2c2c2c">5O</div>
<div class="mh mono" style="left:189.02px;top:202px;color:#2c2c2c">2O</div>
<div class="mh mono" style="left:204.66px;top:202px;color:#2c2c2c">OO</div>
<div class="mh mono" style="left:220.30px;top:202px;color:#2c2c2c">O6</div>
<div class="mh mono" style="left:235.94px;top:202px;color:#2c2c2c">24</div>
<div class="mh mono" style="left:251.58px;top:202px;color:#2c2c2c">OO</div>
<div class="mh mono" style="left:267.22px;top:202px;color:#2c2c2c">OO</div>
<div class="mh mono" style="left:282.86px;top:202px;color:#2c2c2c">C6</div>
<div class="mh mono" style="left:298.50px;top:202px;color:#2c2c2c">8C</div>
<div class="mh mono" style="left:321px;top:202px;color:#262626;letter-spacing:0.05px;-webkit-text-stroke:0.1px #262626">..Â$..@P ..$..ÆŒ</div>
<div class="mh mono" style="left:6px;top:215px;color:#3f3ff2;-webkit-text-stroke:0.1px #3f3ff2">O89OOOFO</div>
<div class="mh mono" style="left:63.90px;top:215px;color:#2c2c2c">OO</div>
<div class="mh mono" style="left:79.54px;top:215px;color:#2c2c2c">OO</div>
<div class="mh mono" style="left:95.18px;top:215px;color:#2c2c2c">O8</div>
<div class="mh mono" style="left:110.82px;top:215px;color:#2c2c2c">3C</div>
<div class="mh mono" style="left:126.46px;top:215px;color:#2c2c2c">OO</div>
<div class="mh mono" style="left:142.10px;top:215px;color:#2c2c2c">OO</div>
<div class="mh mono" style="left:157.74px;top:215px;color:#2c2c2c">O2</div>
<div class="mh mono" style="left:173.38px;top:215px;color:#2c2c2c">25</div>
<div class="mh mono" style="left:189.02px;top:215px;color:#2c2c2c">1E</div>
<div class="mh mono" style="left:204.66px;top:215px;color:#2c2c2c">OO</div>
<div class="mh mono" style="left:220.30px;top:215px;color:#2c2c2c">4O</div>
<div class="mh mono" style="left:235.94px;top:215px;color:#2c2c2c">1O</div>
<div class="mh mono" style="left:251.58px;top:215px;color:#2c2c2c">OO</div>
<div class="mh mono" style="left:267.22px;top:215px;color:#2c2c2c">EO</div>
<div class="mh mono" style="left:282.86px;top:215px;color:#2c2c2c">O2</div>
<div class="mh mono" style="left:298.50px;top:215px;color:#2c2c2c">3C</div>
<div class="mh mono" style="left:321px;top:215px;color:#262626;letter-spacing:0.05px;-webkit-text-stroke:0.1px #262626">...&lt;...%..@..à.&lt;</div>
<div class="mh mono" style="left:6px;top:228px;color:#3f3ff2;-webkit-text-stroke:0.1px #3f3ff2">O89OO1OO</div>
<div class="mh mono" style="left:63.90px;top:228px;color:#2c2c2c">OO</div>
<div class="mh mono" style="left:79.54px;top:228px;color:#2c2c2c">OO</div>
<div class="mh mono" style="left:95.18px;top:228px;color:#2c2c2c">O8</div>
<div class="mh mono" style="left:110.82px;top:228px;color:#2c2c2c">8D</div>
<div class="mh mono" style="left:126.46px;top:228px;color:#2c2c2c">24</div>
<div class="mh mono" style="left:142.10px;top:228px;color:#2c2c2c">28</div>
<div class="mh mono" style="left:157.74px;top:228px;color:#2c2c2c">O2</div>
<div class="mh mono" style="left:173.38px;top:228px;color:#2c2c2c">O1</div>
<div class="mh mono" style="left:189.02px;top:228px;color:#2c2c2c">OO</div>
<div class="mh mono" style="left:204.66px;top:228px;color:#2c2c2c">OO</div>
<div class="mh mono" style="left:220.30px;top:228px;color:#2c2c2c">O3</div>
<div class="mh mono" style="left:235.94px;top:228px;color:#2c2c2c">3C</div>
<div class="mh mono" style="left:251.58px;top:228px;color:#2c2c2c">OO</div>
<div class="mh mono" style="left:267.22px;top:228px;color:#2c2c2c">OO</div>
<div class="mh mono" style="left:282.86px;top:228px;color:#2c2c2c">62</div>
<div class="mh mono" style="left:298.50px;top:228px;color:#2c2c2c">24</div>
<div class="mh mono" style="left:321px;top:228px;color:#262626;letter-spacing:0.05px;-webkit-text-stroke:0.1px #262626">... $(.....&lt;..b$</div>
<div class="mh mono" style="left:6px;top:241px;color:#3f3ff2;-webkit-text-stroke:0.1px #3f3ff2">O89OO11O</div>
<div class="mh mono" style="left:63.90px;top:241px;color:#2c2c2c">O3</div>
<div class="mh mono" style="left:79.54px;top:241px;color:#2c2c2c">OO</div>
<div class="mh mono" style="left:95.18px;top:241px;color:#2c2c2c">4O</div>
<div class="mh mono" style="left:110.82px;top:241px;color:#2c2c2c">1O</div>
<div class="mh mono" style="left:126.46px;top:241px;color:#2c2c2c">O4</div>
<div class="mh mono" style="left:142.10px;top:241px;color:#2c2c2c">OO</div>
<div class="mh mono" style="left:157.74px;top:241px;color:#2c2c2c">O7</div>
<div class="mh mono" style="left:173.38px;top:241px;color:#2c2c2c">3C</div>
<div class="mh mono" style="left:189.02px;top:241px;color:#2c2c2c">OO</div>
<div class="mh mono" style="left:204.66px;top:241px;color:#2c2c2c">OO</div>
<div class="mh mono" style="left:220.30px;top:241px;color:#2c2c2c">62</div>
<div class="mh mono" style="left:235.94px;top:241px;color:#2c2c2c">8C</div>
<div class="mh mono" style="left:251.58px;top:241px;color:#2c2c2c">8O</div>
<div class="mh mono" style="left:267.22px;top:241px;color:#2c2c2c">3A</div>
<div class="mh mono" style="left:282.86px;top:241px;color:#2c2c2c">O2</div>
<div class="mh mono" style="left:298.50px;top:241px;color:#2c2c2c">OO</div>
<div class="mh mono" style="left:321px;top:241px;color:#262626;letter-spacing:0.05px;-webkit-text-stroke:0.1px #262626">..@....&lt;..bŒ€:..</div>
<div class="mh mono" style="left:6px;top:255px;color:#3f3ff2;-webkit-text-stroke:0.1px #3f3ff2">O89OO12O</div>
<div class="mh mono" style="left:63.90px;top:255px;color:#2c2c2c">OO</div>
<div class="mh mono" style="left:79.54px;top:255px;color:#2c2c2c">OO</div>
<div class="mh mono" style="left:95.18px;top:255px;color:#2c2c2c">O4</div>
<div class="mh mono" style="left:110.82px;top:255px;color:#2c2c2c">3C</div>
<div class="mh mono" style="left:126.46px;top:255px;color:#2c2c2c">OO</div>
<div class="mh mono" style="left:142.10px;top:255px;color:#2c2c2c">OO</div>
<div class="mh mono" style="left:157.74px;top:255px;color:#2c2c2c">82</div>
<div class="mh mono" style="left:173.38px;top:255px;color:#2c2c2c">24</div>
<div class="mh mono" style="left:189.02px;top:255px;color:#2c2c2c">1O</div>
<div class="mh mono" style="left:204.66px;top:255px;color:#2c2c2c">OO</div>
<div class="mh mono" style="left:220.30px;top:255px;color:#2c2c2c">4O</div>
<div class="mh mono" style="left:235.94px;top:255px;color:#2c2c2c">1O</div>
<div class="mh mono" style="left:251.58px;top:255px;color:#2c2c2c">91</div>
<div class="mh mono" style="left:267.22px;top:255px;color:#2c2c2c">O8</div>
<div class="mh mono" style="left:282.86px;top:255px;color:#2c2c2c">O2</div>
<div class="mh mono" style="left:298.50px;top:255px;color:#2c2c2c">3C</div>
<div class="mh mono" style="left:321px;top:255px;color:#262626;letter-spacing:0.05px;-webkit-text-stroke:0.1px #262626">...&lt;..‚$..@.‘..&lt;</div>
<div class="mh mono" style="left:6px;top:268px;color:#3f3ff2;-webkit-text-stroke:0.1px #3f3ff2">O89OO13O</div>
<div class="mh mono" style="left:63.90px;top:268px;color:#2c2c2c">OO</div>
<div class="mh mono" style="left:79.54px;top:268px;color:#2c2c2c">OO</div>
<div class="mh mono" style="left:95.18px;top:268px;color:#2c2c2c">84</div>
<div class="mh mono" style="left:110.82px;top:268px;color:#2c2c2c">8C</div>
<div class="mh mono" style="left:126.46px;top:268px;color:#2c2c2c">O5</div>
<div class="mh mono" style="left:142.10px;top:268px;color:#2c2c2c">OO</div>
<div class="mh mono" style="left:157.74px;top:268px;color:#2c2c2c">AO</div>
<div class="mh mono" style="left:173.38px;top:268px;color:#2c2c2c">5O</div>
<div class="mh mono" style="left:189.02px;top:268px;color:#2c2c2c">21</div>
<div class="mh mono" style="left:204.66px;top:268px;color:#2c2c2c">28</div>
<div class="mh mono" style="left:220.30px;top:268px;color:#2c2c2c">4O</div>
<div class="mh mono" style="left:235.94px;top:268px;color:#2c2c2c">O2</div>
<div class="mh mono" style="left:251.58px;top:268px;color:#2c2c2c">FF</div>
<div class="mh mono" style="left:267.22px;top:268px;color:#2c2c2c">7F</div>
<div class="mh mono" style="left:282.86px;top:268px;color:#2c2c2c">O2</div>
<div class="mh mono" style="left:298.50px;top:268px;color:#2c2c2c">3C</div>
<div class="mh mono" style="left:321px;top:268px;color:#262626;letter-spacing:0.05px;-webkit-text-stroke:0.1px #262626">..„Œ.. P!(@.ÿ..&lt;</div>
<div class="mh mono" style="left:6px;top:281px;color:#3f3ff2;-webkit-text-stroke:0.1px #3f3ff2">O89OO14O</div>
<div class="mh mono" style="left:63.90px;top:281px;color:#2c2c2c">FF</div>
<div class="mh mono" style="left:79.54px;top:281px;color:#2c2c2c">FF</div>
<div class="mh mono" style="left:95.18px;top:281px;color:#2c2c2c">42</div>
<div class="mh mono" style="left:110.82px;top:281px;color:#2c2c2c">34</div>
<div class="mh mono" style="left:126.46px;top:281px;color:#2c2c2c">24</div>
<div class="mh mono" style="left:142.10px;top:281px;color:#2c2c2c">9O</div>
<div class="mh mono" style="left:157.74px;top:281px;color:#2c2c2c">42</div>
<div class="mh mono" style="left:173.38px;top:281px;color:#2c2c2c">O2</div>
<div class="mh mono" style="left:189.02px;top:281px;color:#2c2c2c">21</div>
<div class="mh mono" style="left:204.66px;top:281px;color:#2c2c2c">28</div>
<div class="mh mono" style="left:220.30px;top:281px;color:#2c2c2c">4O</div>
<div class="mh mono" style="left:235.94px;top:281px;color:#2c2c2c">O2</div>
<div class="mh mono" style="left:251.58px;top:281px;color:#2c2c2c">61</div>
<div class="mh mono" style="left:267.22px;top:281px;color:#2c2c2c">26</div>
<div class="mh mono" style="left:282.86px;top:281px;color:#2c2c2c">24</div>
<div class="mh mono" style="left:298.50px;top:281px;color:#2c2c2c">OE</div>
<div class="mh mono" style="left:321px;top:281px;color:#262626;letter-spacing:0.05px;-webkit-text-stroke:0.1px #262626">ÿÿB4$ B.!(@.a&amp;$.</div>
<div class="mh mono" style="left:6px;top:294px;color:#3f3ff2;-webkit-text-stroke:0.1px #3f3ff2">O89OO15O</div>
<div class="mh mono" style="left:63.90px;top:294px;color:#2c2c2c">21</div>
<div class="mh mono" style="left:79.54px;top:294px;color:#2c2c2c">48</div>
<div class="mh mono" style="left:95.18px;top:294px;color:#2c2c2c">OO</div>
<div class="mh mono" style="left:110.82px;top:294px;color:#2c2c2c">OO</div>
<div class="mh mono" style="left:126.46px;top:294px;color:#2c2c2c">21</div>
<div class="mh mono" style="left:142.10px;top:294px;color:#2c2c2c">2O</div>
<div class="mh mono" style="left:157.74px;top:294px;color:#2c2c2c">4O</div>
<div class="mh mono" style="left:173.38px;top:294px;color:#2c2c2c">OO</div>
<div class="mh mono" style="left:189.02px;top:294px;color:#2c2c2c">21</div>
<div class="mh mono" style="left:204.66px;top:294px;color:#2c2c2c">28</div>
<div class="mh mono" style="left:220.30px;top:294px;color:#2c2c2c">OO</div>
<div class="mh mono" style="left:235.94px;top:294px;color:#2c2c2c">O2</div>
<div class="mh mono" style="left:251.58px;top:294px;color:#2c2c2c">63</div>
<div class="mh mono" style="left:267.22px;top:294px;color:#2c2c2c">26</div>
<div class="mh mono" style="left:282.86px;top:294px;color:#2c2c2c">24</div>
<div class="mh mono" style="left:298.50px;top:294px;color:#2c2c2c">OE</div>
<div class="mh mono" style="left:321px;top:294px;color:#262626;letter-spacing:0.05px;-webkit-text-stroke:0.1px #262626">!H..! @.!(..c&amp;$.</div>
<div class="mh mono" style="left:6px;top:307px;color:#3f3ff2;-webkit-text-stroke:0.1px #3f3ff2">O89OO16O</div>
<div class="mh mono" style="left:63.90px;top:307px;color:#2c2c2c">21</div>
<div class="mh mono" style="left:79.54px;top:307px;color:#2c2c2c">3O</div>
<div class="mh mono" style="left:95.18px;top:307px;color:#2c2c2c">2O</div>
<div class="mh mono" style="left:110.82px;top:307px;color:#2c2c2c">O2</div>
<div class="mh mono" style="left:126.46px;top:307px;color:#2c2c2c">2A</div>
<div class="mh mono" style="left:142.10px;top:307px;color:#2c2c2c">OO</div>
<div class="mh mono" style="left:157.74px;top:307px;color:#2c2c2c">24</div>
<div class="mh mono" style="left:173.38px;top:307px;color:#2c2c2c">OA</div>
<div class="mh mono" style="left:189.02px;top:307px;color:#2c2c2c">21</div>
<div class="mh mono" style="left:204.66px;top:307px;color:#2c2c2c">1O</div>
<div class="mh mono" style="left:220.30px;top:307px;color:#2c2c2c">OO</div>
<div class="mh mono" style="left:235.94px;top:307px;color:#2c2c2c">OO</div>
<div class="mh mono" style="left:251.58px;top:307px;color:#2c2c2c">4D</div>
<div class="mh mono" style="left:267.22px;top:307px;color:#2c2c2c">OO</div>
<div class="mh mono" style="left:282.86px;top:307px;color:#2c2c2c">24</div>
<div class="mh mono" style="left:298.50px;top:307px;color:#2c2c2c">OA</div>
<div class="mh mono" style="left:321px;top:307px;color:#262626;letter-spacing:0.05px;-webkit-text-stroke:0.1px #262626">!O .*.$.!...M.$.</div>
<div class="mh mono" style="left:6px;top:320px;color:#3f3ff2;-webkit-text-stroke:0.1px #3f3ff2">O89OO17O</div>
<div class="mh mono" style="left:63.90px;top:320px;color:#2c2c2c">1O</div>
<div class="mh mono" style="left:79.54px;top:320px;color:#2c2c2c">9C</div>
<div class="mh mono" style="left:95.18px;top:320px;color:#2c2c2c">44</div>
<div class="mh mono" style="left:110.82px;top:320px;color:#2c2c2c">24</div>
<div class="mh mono" style="left:126.46px;top:320px;color:#2c2c2c">OO</div>
<div class="mh mono" style="left:142.10px;top:320px;color:#2c2c2c">8O</div>
<div class="mh mono" style="left:157.74px;top:320px;color:#2c2c2c">O8</div>
<div class="mh mono" style="left:173.38px;top:320px;color:#2c2c2c">3C</div>
<div class="mh mono" style="left:189.02px;top:320px;color:#2c2c2c">42</div>
<div class="mh mono" style="left:204.66px;top:320px;color:#2c2c2c">OO</div>
<div class="mh mono" style="left:220.30px;top:320px;color:#2c2c2c">24</div>
<div class="mh mono" style="left:235.94px;top:320px;color:#2c2c2c">OA</div>
<div class="mh mono" style="left:251.58px;top:320px;color:#2c2c2c">OO</div>
<div class="mh mono" style="left:267.22px;top:320px;color:#2c2c2c">8O</div>
<div class="mh mono" style="left:282.86px;top:320px;color:#2c2c2c">O5</div>
<div class="mh mono" style="left:298.50px;top:320px;color:#2c2c2c">3C</div>
<div class="mh mono" style="left:321px;top:320px;color:#262626;letter-spacing:0.05px;-webkit-text-stroke:0.1px #262626">.œD$.€.&lt;B.$..€.&lt;</div>
<div class="mh mono" style="left:6px;top:333px;color:#3f3ff2;-webkit-text-stroke:0.1px #3f3ff2">O89OO18O</div>
<div class="mh mono" style="left:63.90px;top:333px;color:#2c2c2c">9O</div>
<div class="mh mono" style="left:79.54px;top:333px;color:#2c2c2c">FF</div>
<div class="mh mono" style="left:95.18px;top:333px;color:#2c2c2c">BD</div>
<div class="mh mono" style="left:110.82px;top:333px;color:#2c2c2c">27</div>
<div class="mh mono" style="left:126.46px;top:333px;color:#2c2c2c">64</div>
<div class="mh mono" style="left:142.10px;top:333px;color:#2c2c2c">OO</div>
<div class="mh mono" style="left:157.74px;top:333px;color:#2c2c2c">B5</div>
<div class="mh mono" style="left:173.38px;top:333px;color:#2c2c2c">AF</div>
<div class="mh mono" style="left:189.02px;top:333px;color:#2c2c2c">6O</div>
<div class="mh mono" style="left:204.66px;top:333px;color:#2c2c2c">OO</div>
<div class="mh mono" style="left:220.30px;top:333px;color:#2c2c2c">B4</div>
<div class="mh mono" style="left:235.94px;top:333px;color:#2c2c2c">AF</div>
<div class="mh mono" style="left:251.58px;top:333px;color:#2c2c2c">5C</div>
<div class="mh mono" style="left:267.22px;top:333px;color:#2c2c2c">OO</div>
<div class="mh mono" style="left:282.86px;top:333px;color:#2c2c2c">B3</div>
<div class="mh mono" style="left:298.50px;top:333px;color:#2c2c2c">AF</div>
<div class="mh mono" style="left:321px;top:333px;color:#262626;letter-spacing:0.05px;-webkit-text-stroke:0.1px #262626"> ÿ½'d.µ¯`.´¯\.³¯</div>
<div class="mh mono" style="left:6px;top:346px;color:#3f3ff2;-webkit-text-stroke:0.1px #3f3ff2">O89OO19O</div>
<div class="mh mono" style="left:63.90px;top:346px;color:#2c2c2c">58</div>
<div class="mh mono" style="left:79.54px;top:346px;color:#2c2c2c">OO</div>
<div class="mh mono" style="left:95.18px;top:346px;color:#2c2c2c">B2</div>
<div class="mh mono" style="left:110.82px;top:346px;color:#2c2c2c">AF</div>
<div class="mh mono" style="left:126.46px;top:346px;color:#2c2c2c">54</div>
<div class="mh mono" style="left:142.10px;top:346px;color:#2c2c2c">OO</div>
<div class="mh mono" style="left:157.74px;top:346px;color:#2c2c2c">B1</div>
<div class="mh mono" style="left:173.38px;top:346px;color:#2c2c2c">AF</div>
<div class="mh mono" style="left:189.02px;top:346px;color:#2c2c2c">5O</div>
<div class="mh mono" style="left:204.66px;top:346px;color:#2c2c2c">OO</div>
<div class="mh mono" style="left:220.30px;top:346px;color:#2c2c2c">BO</div>
<div class="mh mono" style="left:235.94px;top:346px;color:#2c2c2c">AF</div>
<div class="mh mono" style="left:251.58px;top:346px;color:#2c2c2c">21</div>
<div class="mh mono" style="left:267.22px;top:346px;color:#2c2c2c">AO</div>
<div class="mh mono" style="left:282.86px;top:346px;color:#2c2c2c">8O</div>
<div class="mh mono" style="left:298.50px;top:346px;color:#2c2c2c">OO</div>
<div class="mh mono" style="left:321px;top:346px;color:#262626;letter-spacing:0.05px;-webkit-text-stroke:0.1px #262626">X.²¯T.±¯P.°¯! €.</div>
<div class="mh mono" style="left:6px;top:360px;color:#3f3ff2;-webkit-text-stroke:0.1px #3f3ff2">O89OO1AO</div>
<div class="mh mono" style="left:63.90px;top:360px;color:#2c2c2c">21</div>
<div class="mh mono" style="left:79.54px;top:360px;color:#2c2c2c">98</div>
<div class="mh mono" style="left:95.18px;top:360px;color:#2c2c2c">AO</div>
<div class="mh mono" style="left:110.82px;top:360px;color:#2c2c2c">OO</div>
<div class="mh mono" style="left:126.46px;top:360px;color:#2c2c2c">21</div>
<div class="mh mono" style="left:142.10px;top:360px;color:#2c2c2c">9O</div>
<div class="mh mono" style="left:157.74px;top:360px;color:#2c2c2c">OO</div>
<div class="mh mono" style="left:173.38px;top:360px;color:#2c2c2c">OO</div>
<div class="mh mono" style="left:189.02px;top:360px;color:#2c2c2c">21</div>
<div class="mh mono" style="left:204.66px;top:360px;color:#2c2c2c">8O</div>
<div class="mh mono" style="left:220.30px;top:360px;color:#2c2c2c">OO</div>
<div class="mh mono" style="left:235.94px;top:360px;color:#2c2c2c">OO</div>
<div class="mh mono" style="left:251.58px;top:360px;color:#2c2c2c">21</div>
<div class="mh mono" style="left:267.22px;top:360px;color:#2c2c2c">88</div>
<div class="mh mono" style="left:282.86px;top:360px;color:#2c2c2c">AO</div>
<div class="mh mono" style="left:298.50px;top:360px;color:#2c2c2c">O3</div>
<div class="mh mono" style="left:321px;top:360px;color:#262626;letter-spacing:0.05px;-webkit-text-stroke:0.1px #262626">!˜ .! ..!€..!ˆ .</div>
<div class="mh mono" style="left:6px;top:373px;color:#3f3ff2;-webkit-text-stroke:0.1px #3f3ff2">O89OO1BO</div>
<div class="mh mono" style="left:63.90px;top:373px;color:#2c2c2c">13</div>
<div class="mh mono" style="left:79.54px;top:373px;color:#2c2c2c">OO</div>
<div class="mh mono" style="left:95.18px;top:373px;color:#2c2c2c">15</div>
<div class="mh mono" style="left:110.82px;top:373px;color:#2c2c2c">24</div>
<div class="mh mono" style="left:126.46px;top:373px;color:#2c2c2c">76</div>
<div class="mh mono" style="left:142.10px;top:373px;color:#2c2c2c">OO</div>
<div class="mh mono" style="left:157.74px;top:373px;color:#2c2c2c">24</div>
<div class="mh mono" style="left:173.38px;top:373px;color:#2c2c2c">OA</div>
<div class="mh mono" style="left:189.02px;top:373px;color:#2c2c2c">68</div>
<div class="mh mono" style="left:204.66px;top:373px;color:#2c2c2c">OO</div>
<div class="mh mono" style="left:220.30px;top:373px;color:#2c2c2c">BF</div>
<div class="mh mono" style="left:235.94px;top:373px;color:#2c2c2c">AF</div>
<div class="mh mono" style="left:251.58px;top:373px;color:#2c2c2c">OO</div>
<div class="mh mono" style="left:267.22px;top:373px;color:#2c2c2c">OO</div>
<div class="mh mono" style="left:282.86px;top:373px;color:#2c2c2c">24</div>
<div class="mh mono" style="left:298.50px;top:373px;color:#2c2c2c">AE</div>
<div class="mh mono" style="left:321px;top:373px;color:#262626;letter-spacing:0.05px;-webkit-text-stroke:0.1px #262626">...$v.$.h.¿¯..$®</div>
<div class="mh mono" style="left:6px;top:386px;color:#3f3ff2;-webkit-text-stroke:0.1px #3f3ff2">O89OO1CO</div>
<div class="mh mono" style="left:63.90px;top:386px;color:#2c2c2c">C5</div>
<div class="mh mono" style="left:79.54px;top:386px;color:#2c2c2c">1O</div>
<div class="mh mono" style="left:95.18px;top:386px;color:#2c2c2c">24</div>
<div class="mh mono" style="left:110.82px;top:386px;color:#2c2c2c">OE</div>
<div class="mh mono" style="left:126.46px;top:386px;color:#2c2c2c">O1</div>
<div class="mh mono" style="left:142.10px;top:386px;color:#2c2c2c">OO</div>
<div class="mh mono" style="left:157.74px;top:386px;color:#2c2c2c">52</div>
<div class="mh mono" style="left:173.38px;top:386px;color:#2c2c2c">26</div>
<div class="mh mono" style="left:189.02px;top:386px;color:#2c2c2c">O6</div>
<div class="mh mono" style="left:204.66px;top:386px;color:#2c2c2c">OO</div>
<div class="mh mono" style="left:220.30px;top:386px;color:#2c2c2c">55</div>
<div class="mh mono" style="left:235.94px;top:386px;color:#2c2c2c">12</div>
<div class="mh mono" style="left:251.58px;top:386px;color:#2c2c2c">O4</div>
<div class="mh mono" style="left:267.22px;top:386px;color:#2c2c2c">OO</div>
<div class="mh mono" style="left:282.86px;top:386px;color:#2c2c2c">31</div>
<div class="mh mono" style="left:298.50px;top:386px;color:#2c2c2c">26</div>
<div class="mh mono" style="left:321px;top:386px;color:#262626;letter-spacing:0.05px;-webkit-text-stroke:0.1px #262626">Å.$...R&amp;..U...1&amp;</div>
<div class="mh mono" style="left:6px;top:399px;color:#3f3ff2;-webkit-text-stroke:0.1px #3f3ff2">O89OO1DO</div>
<div class="mh mono" style="left:63.90px;top:399px;color:#2c2c2c">O1</div>
<div class="mh mono" style="left:79.54px;top:399px;color:#2c2c2c">OO</div>
<div class="mh mono" style="left:95.18px;top:399px;color:#2c2c2c">42</div>
<div class="mh mono" style="left:110.82px;top:399px;color:#2c2c2c">24</div>
<div class="mh mono" style="left:126.46px;top:399px;color:#2c2c2c">21</div>
<div class="mh mono" style="left:142.10px;top:399px;color:#2c2c2c">8O</div>
<div class="mh mono" style="left:157.74px;top:399px;color:#2c2c2c">O2</div>
<div class="mh mono" style="left:173.38px;top:399px;color:#2c2c2c">O2</div>
<div class="mh mono" style="left:189.02px;top:399px;color:#2c2c2c">2B</div>
<div class="mh mono" style="left:204.66px;top:399px;color:#2c2c2c">1O</div>
<div class="mh mono" style="left:220.30px;top:399px;color:#2c2c2c">14</div>
<div class="mh mono" style="left:235.94px;top:399px;color:#2c2c2c">O2</div>
<div class="mh mono" style="left:251.58px;top:399px;color:#2c2c2c">F7</div>
<div class="mh mono" style="left:267.22px;top:399px;color:#2c2c2c">FF</div>
<div class="mh mono" style="left:282.86px;top:399px;color:#2c2c2c">4O</div>
<div class="mh mono" style="left:298.50px;top:399px;color:#2c2c2c">14</div>
<div class="mh mono" style="left:321px;top:399px;color:#262626;letter-spacing:0.05px;-webkit-text-stroke:0.1px #262626">..B$!€..+...÷ÿ@.</div>
<div class="mh mono" style="left:6px;top:412px;color:#3f3ff2;-webkit-text-stroke:0.1px #3f3ff2">O89OO1EO</div>
<div class="mh mono" style="left:63.90px;top:412px;color:#2c2c2c">21</div>
<div class="mh mono" style="left:79.54px;top:412px;color:#2c2c2c">2O</div>
<div class="mh mono" style="left:95.18px;top:412px;color:#2c2c2c">7O</div>
<div class="mh mono" style="left:110.82px;top:412px;color:#2c2c2c">O2</div>
<div class="mh mono" style="left:126.46px;top:412px;color:#2c2c2c">8O</div>
<div class="mh mono" style="left:142.10px;top:412px;color:#2c2c2c">1O</div>
<div class="mh mono" style="left:157.74px;top:412px;color:#2c2c2c">12</div>
<div class="mh mono" style="left:173.38px;top:412px;color:#2c2c2c">OO</div>
<div class="mh mono" style="left:189.02px;top:412px;color:#2c2c2c">9O</div>
<div class="mh mono" style="left:204.66px;top:412px;color:#2c2c2c">O8</div>
<div class="mh mono" style="left:220.30px;top:412px;color:#2c2c2c">O3</div>
<div class="mh mono" style="left:235.94px;top:412px;color:#2c2c2c">3C</div>
<div class="mh mono" style="left:251.58px;top:412px;color:#2c2c2c">21</div>
<div class="mh mono" style="left:267.22px;top:412px;color:#2c2c2c">1O</div>
<div class="mh mono" style="left:282.86px;top:412px;color:#2c2c2c">5D</div>
<div class="mh mono" style="left:298.50px;top:412px;color:#2c2c2c">OO</div>
<div class="mh mono" style="left:321px;top:412px;color:#262626;letter-spacing:0.05px;-webkit-text-stroke:0.1px #262626">! p.€... ..&lt;!.].</div>
<div class="mh mono" style="left:6px;top:425px;color:#3f3ff2;-webkit-text-stroke:0.1px #3f3ff2">O89OO1FO</div>
<div class="mh mono" style="left:63.90px;top:425px;color:#2c2c2c">38</div>
<div class="mh mono" style="left:79.54px;top:425px;color:#2c2c2c">58</div>
<div class="mh mono" style="left:95.18px;top:425px;color:#2c2c2c">63</div>
<div class="mh mono" style="left:110.82px;top:425px;color:#2c2c2c">24</div>
<div class="mh mono" style="left:126.46px;top:425px;color:#2c2c2c">O4</div>
<div class="mh mono" style="left:142.10px;top:425px;color:#2c2c2c">OO</div>
<div class="mh mono" style="left:157.74px;top:425px;color:#2c2c2c">6O</div>
<div class="mh mono" style="left:173.38px;top:425px;color:#2c2c2c">1O</div>
<div class="mh mono" style="left:189.02px;top:425px;color:#2c2c2c">OO</div>
<div class="mh mono" style="left:204.66px;top:425px;color:#2c2c2c">OO</div>
<div class="mh mono" style="left:220.30px;top:425px;color:#2c2c2c">4O</div>
<div class="mh mono" style="left:235.94px;top:425px;color:#2c2c2c">AC</div>
<div class="mh mono" style="left:251.58px;top:425px;color:#2c2c2c">21</div>
<div class="mh mono" style="left:267.22px;top:425px;color:#2c2c2c">2O</div>
<div class="mh mono" style="left:282.86px;top:425px;color:#2c2c2c">4O</div>
<div class="mh mono" style="left:298.50px;top:425px;color:#2c2c2c">O2</div>
<div class="mh mono" style="left:321px;top:425px;color:#262626;letter-spacing:0.05px;-webkit-text-stroke:0.1px #262626">8Xc$..`...@¬! @.</div>
<div class="mh mono" style="left:6px;top:438px;color:#3f3ff2;-webkit-text-stroke:0.1px #3f3ff2">O89OO2OO</div>
<div class="mh mono" style="left:63.90px;top:438px;color:#2c2c2c">OE</div>
<div class="mh mono" style="left:79.54px;top:438px;color:#2c2c2c">16</div>
<div class="mh mono" style="left:95.18px;top:438px;color:#2c2c2c">24</div>
<div class="mh mono" style="left:110.82px;top:438px;color:#2c2c2c">OE</div>
<div class="mh mono" style="left:126.46px;top:438px;color:#2c2c2c">21</div>
<div class="mh mono" style="left:142.10px;top:438px;color:#2c2c2c">28</div>
<div class="mh mono" style="left:157.74px;top:438px;color:#2c2c2c">AO</div>
<div class="mh mono" style="left:173.38px;top:438px;color:#2c2c2c">O3</div>
<div class="mh mono" style="left:189.02px;top:438px;color:#2c2c2c">91</div>
<div class="mh mono" style="left:204.66px;top:438px;color:#2c2c2c">O8</div>
<div class="mh mono" style="left:220.30px;top:438px;color:#2c2c2c">O4</div>
<div class="mh mono" style="left:235.94px;top:438px;color:#2c2c2c">3C</div>
<div class="mh mono" style="left:251.58px;top:438px;color:#2c2c2c">78</div>
<div class="mh mono" style="left:267.22px;top:438px;color:#2c2c2c">1O</div>
<div class="mh mono" style="left:282.86px;top:438px;color:#2c2c2c">24</div>
<div class="mh mono" style="left:298.50px;top:438px;color:#2c2c2c">OE</div>
<div class="mh mono" style="left:321px;top:438px;color:#262626;letter-spacing:0.05px;-webkit-text-stroke:0.1px #262626">..$.!( .‘..&lt;x.$.</div>
</div>
<div class="win active" style="left:893px;top:41px;width:119px;height:543px">
<div class="pill" style="left:7px;top:10px"></div>
<div class="ttl" style="left:24px;top:8px">R..</div>
<div class="btn min" style="left:37px;top:7px"></div>
<div class="btn max" style="left:62px;top:7px"></div>
<div class="btn cls" style="left:87px;top:7px"></div>
</div>
<div class="g" style="left:938px;top:55.5px;width:9px;height:4px;border:1px solid #707888;border-radius:1px;background:#f2f2f2"></div>
<div class="g" style="left:963px;top:52px;width:9px;height:8px;border:1px solid #707888;border-radius:1px;background:#f2f2f2"></div>
<div class="g" style="left:965px;top:54px;width:5px;height:3px;border:1px solid #707888;background:#6a7a90"></div>
<svg class="g" style="left:986.5px;top:51.5px" width="11" height="9" viewBox="0 0 11 9"><path d="M2.5 2 L8.5 7 M8.5 2 L2.5 7" stroke="#707888" stroke-width="3" stroke-linecap="round"/><path d="M2.5 2 L8.5 7 M8.5 2 L2.5 7" stroke="#f6f6f6" stroke-width="1.5" stroke-linecap="round"/></svg>
<div class="content" style="left:900px;top:64px;width:105px;height:513px;border:1px solid #8b8d90">
<div class="abs" style="left:0;top:0;width:89px;height:20px;background:linear-gradient(#ffffff 0,#ffffff 30%,#f3f4f6 36%,#eceef1 100%);border-bottom:1px solid #d8d8da"></div>
<div class="abs" style="left:26px;top:1px;width:1px;height:19px;background:#e2e3e6"></div>
<div class="abs" style="left:79px;top:1px;width:1px;height:19px;background:#e2e3e6"></div>
<div class="abs" style="left:0;top:33px;width:89px;height:1px;background:#f0f0f0"></div>
<div class="reg" style="left:5px;top:22px">s7</div>
<div class="reg" style="left:31.5px;top:22px">08910000</div>
<div class="abs" style="left:0;top:47px;width:89px;height:1px;background:#f0f0f0"></div>
<div class="reg" style="left:5px;top:36px">t8</div>
<div class="reg" style="left:31.5px;top:36px">14000000</div>
<div class="abs" style="left:0;top:61px;width:89px;height:1px;background:#f0f0f0"></div>
<div class="reg" style="left:5px;top:50px">t9</div>
<div class="reg" style="left:31.5px;top:50px">00000000</div>
<div class="abs" style="left:0;top:75px;width:89px;height:1px;background:#f0f0f0"></div>
<div class="reg" style="left:5px;top:64px">k0</div>
<div class="reg" style="left:31.5px;top:64px">09F00000</div>
<div class="abs" style="left:0;top:89px;width:89px;height:1px;background:#f0f0f0"></div>
<div class="reg" style="left:5px;top:78px">k1</div>
<div class="reg" style="left:31.5px;top:78px">00000000</div>
<div class="abs" style="left:0;top:103px;width:89px;height:1px;background:#f0f0f0"></div>
<div class="reg" style="left:5px;top:92px">gp</div>
<div class="reg" style="left:31.5px;top:92px">08913D50</div>
<div class="abs" style="left:0;top:117px;width:89px;height:1px;background:#f0f0f0"></div>
<div class="reg" style="left:5px;top:106px">sp</div>
<div class="reg" style="left:31.5px;top:106px">09EFFF28</div>
<div class="abs" style="left:0;top:131px;width:89px;height:1px;background:#f0f0f0"></div>
<div class="reg" style="left:5px;top:120px">fp</div>
<div class="reg" style="left:31.5px;top:120px">08910000</div>
<div class="abs" style="left:0;top:145px;width:89px;height:1px;background:#f0f0f0"></div>
<div class="reg" style="left:5px;top:134px">ra</div>
<div class="reg" style="left:31.5px;top:134px">0890064C</div>
<div class="abs" style="left:0;top:159px;width:89px;height:1px;background:#f0f0f0"></div>
<div class="reg" style="left:5px;top:148px">f0</div>
<div class="reg" style="left:31.5px;top:148px">1.000000</div>
<div class="abs" style="left:0;top:173px;width:89px;height:1px;background:#f0f0f0"></div>
<div class="reg" style="left:5px;top:162px">f1</div>
<div class="reg" style="left:31.5px;top:162px">1.000000</div>
<div class="abs" style="left:0;top:187px;width:89px;height:1px;background:#f0f0f0"></div>
<div class="reg" style="left:5px;top:176px">f2</div>
<div class="reg" style="left:31.5px;top:176px">1.000000</div>
<div class="abs" style="left:0;top:201px;width:89px;height:1px;background:#f0f0f0"></div>
<div class="reg" style="left:5px;top:190px">f3</div>
<div class="reg" style="left:31.5px;top:190px">0.257760</div>
<div class="abs" style="left:0;top:215px;width:89px;height:1px;background:#f0f0f0"></div>
<div class="reg" style="left:5px;top:204px">f4</div>
<div class="reg" style="left:31.5px;top:204px">0.130865</div>
<div class="abs" style="left:0;top:229px;width:89px;height:1px;background:#f0f0f0"></div>
<div class="reg" style="left:5px;top:218px">f5</div>
<div class="reg" style="left:31.5px;top:218px">28.000000</div>
<div class="abs" style="left:0;top:243px;width:89px;height:1px;background:#f0f0f0"></div>
<div class="reg" style="left:5px;top:232px">f6</div>
<div class="reg" style="left:31.5px;top:232px">0.000092</div>
<div class="abs" style="left:0;top:257px;width:89px;height:1px;background:#f0f0f0"></div>
<div class="reg" style="left:5px;top:246px">f7</div>
<div class="reg" style="left:31.5px;top:246px">nan</div>
<div class="abs" style="left:0;top:270px;width:89px;height:1px;background:#f0f0f0"></div>
<div class="reg" style="left:5px;top:259px">f8</div>
<div class="reg" style="left:31.5px;top:259px">nan</div>
<div class="abs" style="left:0;top:284px;width:89px;height:1px;background:#f0f0f0"></div>
<div class="reg" style="left:5px;top:273px">f9</div>
<div class="reg" style="left:31.5px;top:273px">nan</div>
<div class="abs" style="left:0;top:298px;width:89px;height:1px;background:#f0f0f0"></div>
<div class="reg" style="left:5px;top:287px">f10</div>
<div class="reg" style="left:31.5px;top:287px">nan</div>
<div class="abs" style="left:0;top:312px;width:89px;height:1px;background:#f0f0f0"></div>
<div class="reg" style="left:5px;top:301px">f11</div>
<div class="reg" style="left:31.5px;top:301px">nan</div>
<div class="abs" style="left:0;top:326px;width:89px;height:1px;background:#f0f0f0"></div>
<div class="reg" style="left:5px;top:315px">f12</div>
<div class="reg" style="left:31.5px;top:315px">0.110000</div>
<div class="abs" style="left:0;top:340px;width:89px;height:1px;background:#f0f0f0"></div>
<div class="reg" style="left:5px;top:329px">f13</div>
<div class="reg" style="left:31.5px;top:329px">-0.000000</div>
<div class="abs" style="left:0;top:354px;width:89px;height:1px;background:#f0f0f0"></div>
<div class="reg" style="left:5px;top:343px">f14</div>
<div class="reg" style="left:31.5px;top:343px">272.000...</div>
<div class="abs" style="left:0;top:368px;width:89px;height:1px;background:#f0f0f0"></div>
<div class="reg" style="left:5px;top:357px">f15</div>
<div class="reg" style="left:31.5px;top:357px">0.000000</div>
<div class="abs" style="left:0;top:382px;width:89px;height:1px;background:#f0f0f0"></div>
<div class="reg" style="left:5px;top:371px">f16</div>
<div class="reg" style="left:31.5px;top:371px">-1.000000</div>
<div class="abs" style="left:0;top:396px;width:89px;height:1px;background:#f0f0f0"></div>
<div class="reg" style="left:5px;top:385px">f17</div>
<div class="reg" style="left:31.5px;top:385px">1.000000</div>
<div class="abs" style="left:0;top:410px;width:89px;height:1px;background:#f0f0f0"></div>
<div class="reg" style="left:5px;top:399px">f18</div>
<div class="reg" style="left:31.5px;top:399px">nan</div>
<div class="abs" style="left:0;top:424px;width:89px;height:1px;background:#f0f0f0"></div>
<div class="reg" style="left:5px;top:413px">f19</div>
<div class="reg" style="left:31.5px;top:413px">nan</div>
<div class="abs" style="left:0;top:438px;width:89px;height:1px;background:#f0f0f0"></div>
<div class="reg" style="left:5px;top:427px">f20</div>
<div class="reg" style="left:31.5px;top:427px">0.010000</div>
<div class="abs" style="left:0;top:452px;width:89px;height:1px;background:#f0f0f0"></div>
<div class="reg" style="left:5px;top:441px">f21</div>
<div class="reg" style="left:31.5px;top:441px">0.007812</div>
<div class="abs" style="left:0;top:466px;width:89px;height:1px;background:#f0f0f0"></div>
<div class="reg" style="left:5px;top:455px">f22</div>
<div class="reg" style="left:31.5px;top:455px">0.030000</div>
<div class="abs" style="left:0;top:480px;width:89px;height:1px;background:#f0f0f0"></div>
<div class="reg" style="left:5px;top:469px">f23</div>
<div class="reg" style="left:31.5px;top:469px">nan</div>
<div class="abs" style="left:0;top:494px;width:89px;height:1px;background:#f0f0f0"></div>
<div class="reg" style="left:5px;top:483px">f24</div>
<div class="reg" style="left:31.5px;top:483px">nan</div>
<div class="abs" style="left:0;top:508px;width:89px;height:1px;background:#f0f0f0"></div>
<div class="reg" style="left:5px;top:497px">f25</div>
<div class="reg" style="left:31.5px;top:497px">nan</div>
<div class="abs" style="left:27px;top:20px;width:1px;height:500px;background:#f0f0f0"></div>
<div class="abs" style="left:79px;top:20px;width:1px;height:500px;background:#f0f0f0"></div>
<div class="reg" style="left:5px;top:5px;color:#1e2a3a">REG</div>
<div class="reg" style="left:31.5px;top:5px;color:#1e2a3a">HEX</div>
<div class="abs" style="left:89px;top:0;width:14px;height:511px;background:#efefef"></div>
<div class="abs" style="left:89px;top:2px;width:13px;height:13px;border:1px solid #c0c0c0;border-radius:2px;background:linear-gradient(90deg,#f8f8f8,#e4e4e4)"></div>
<div class="abs" style="left:89px;top:496px;width:13px;height:14px;border:1px solid #c0c0c0;border-radius:2px;background:linear-gradient(90deg,#f8f8f8,#e4e4e4)"></div>
<svg class="abs" style="left:92px;top:6px" width="7" height="5"><path d="M1 4 L3.5 1 L6 4Z" fill="#6e6e6e"/></svg>
<svg class="abs" style="left:92px;top:501px" width="7" height="5"><path d="M1 1 L3.5 4 L6 1Z" fill="#6e6e6e"/></svg>
<div class="abs" style="left:89px;top:203px;width:13px;height:250px;border:1px solid #6f97c4;border-radius:2px;background:linear-gradient(90deg,#e3f2fc 0,#d6edfb 40%,#a9d9f5 45%,#9fd2f2 100%)"></div>
<div class="abs" style="left:92.5px;top:324px;width:6px;height:1.5px;background:rgba(50,100,130,0.75)"></div>
<div class="abs" style="left:92.5px;top:327px;width:6px;height:1.5px;background:rgba(50,100,130,0.75)"></div>
<div class="abs" style="left:92.5px;top:329px;width:6px;height:1.5px;background:rgba(50,100,130,0.75)"></div>
</div>
<div class="win" style="left:893px;top:585px;width:118px;height:211px">
<div class="pill" style="left:7px;top:10px"></div>
<div class="ttl" style="left:24px;top:8px">C..</div>
<div class="btn min" style="left:36px;top:7px"></div>
<div class="btn max" style="left:61px;top:7px"></div>
<div class="btn cls" style="left:86px;top:7px"></div>
</div>
<div class="g" style="left:937px;top:599.5px;width:9px;height:4px;border:1px solid #707888;border-radius:1px;background:#f2f2f2"></div>
<div class="g" style="left:962px;top:596px;width:9px;height:8px;border:1px solid #707888;border-radius:1px;background:#f2f2f2"></div>
<div class="g" style="left:964px;top:598px;width:5px;height:3px;border:1px solid #707888;background:#6a7a90"></div>
<svg class="g" style="left:985.5px;top:595.5px" width="11" height="9" viewBox="0 0 11 9"><path d="M2.5 2 L8.5 7 M8.5 2 L2.5 7" stroke="#707888" stroke-width="3" stroke-linecap="round"/><path d="M2.5 2 L8.5 7 M8.5 2 L2.5 7" stroke="#f6f6f6" stroke-width="1.5" stroke-linecap="round"/></svg>
<div class="content" style="left:899px;top:608px;width:106px;height:181px;border:1px solid #8b8d90">
<div class="abs" style="left:0;top:0;width:104px;height:20px;background:linear-gradient(#ffffff 0,#ffffff 30%,#f3f4f6 36%,#eceef1 100%);border-bottom:1px solid #d8d8da"></div>
<div class="abs" style="left:99px;top:1px;width:1px;height:19px;background:#e2e3e6"></div>
<div class="reg" style="left:6px;top:5px;color:#1e2a3a">Adress</div>
<div class="reg" style="left:6px;top:22px">08903BD8</div>
<div class="abs" style="left:0;top:34px;width:104px;height:1px;background:#f0f0f0"></div>
<div class="abs" style="left:0;top:48px;width:104px;height:1px;background:#f0f0f0"></div>
<div class="abs" style="left:0;top:62px;width:104px;height:1px;background:#f0f0f0"></div>
<div class="abs" style="left:0;top:76px;width:104px;height:1px;background:#f0f0f0"></div>
<div class="abs" style="left:0;top:90px;width:104px;height:1px;background:#f0f0f0"></div>
<div class="abs" style="left:0;top:104px;width:104px;height:1px;background:#f0f0f0"></div>
<div class="abs" style="left:0;top:118px;width:104px;height:1px;background:#f0f0f0"></div>
<div class="abs" style="left:0;top:132px;width:104px;height:1px;background:#f0f0f0"></div>
<div class="abs" style="left:0;top:146px;width:104px;height:1px;background:#f0f0f0"></div>
<div class="abs" style="left:0;top:160px;width:104px;height:1px;background:#f0f0f0"></div>
<div class="abs" style="left:0;top:174px;width:104px;height:1px;background:#f0f0f0"></div>
<div class="abs" style="left:99px;top:20px;width:1px;height:160px;background:#f3f3f3"></div>
</div>
<div class="abs" style="left:0;top:814px;width:1024px;height:2px;background:#aaaaaa"></div>
<div class="abs" style="left:0;top:814px;width:62px;height:2px;background:#7a7a7a"></div>
<div class="abs" style="left:586px;top:814px;width:127px;height:2px;background:#222;border-radius:2px 2px 0 0"></div>
</body></html>
